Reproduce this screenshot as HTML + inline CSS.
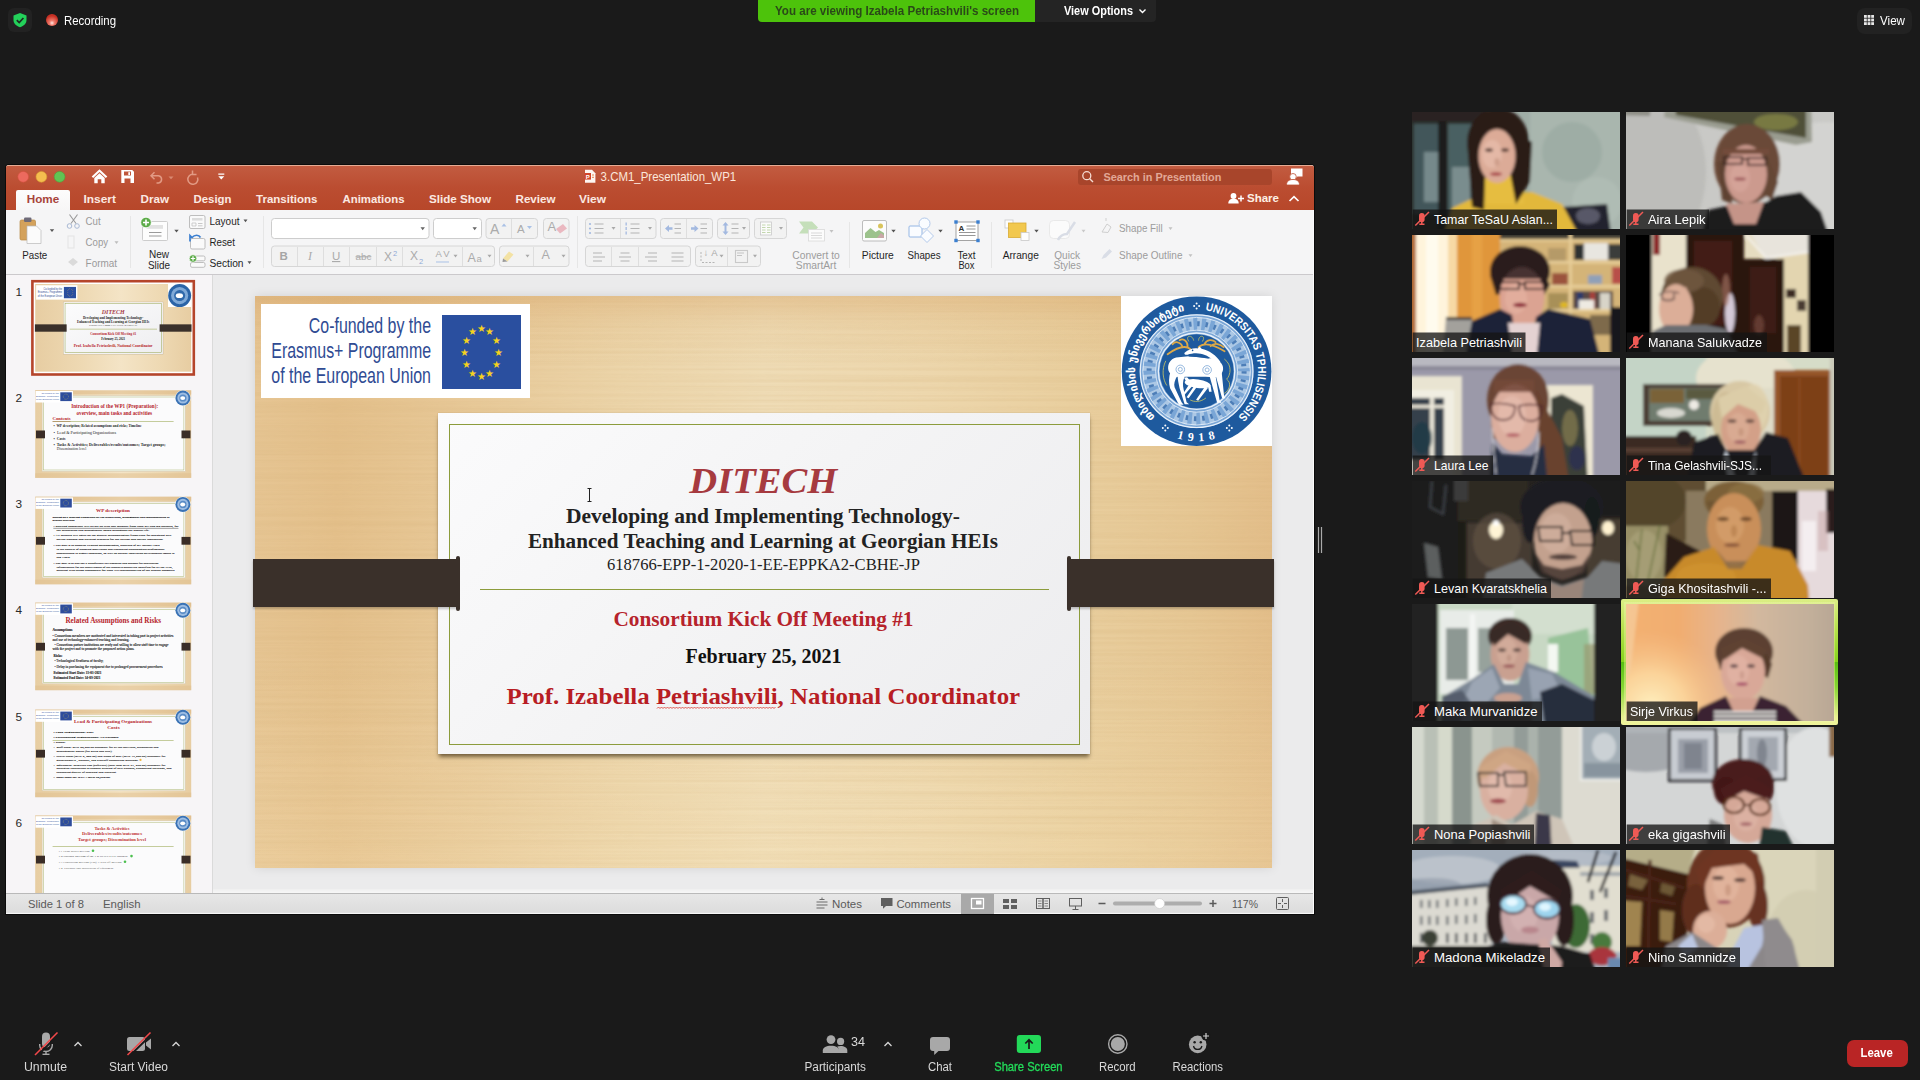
<!DOCTYPE html>
<html lang="en">
<head>
<meta charset="utf-8">
<title>Zoom Meeting</title>
<style>
html,body{margin:0;padding:0;background:#1a1a1a;}
body{width:1920px;height:1080px;overflow:hidden;position:relative;font-family:"Liberation Sans",sans-serif;}
.a{position:absolute;}
svg{position:absolute;left:0;top:0;overflow:visible;}
svg text{font-family:"Liberation Sans",sans-serif;white-space:pre;}
.ser{font-family:"Liberation Serif",serif !important;}
.tile{position:absolute;width:208px;height:117px;overflow:hidden;background:#333;}
.nm{position:absolute;left:0;bottom:0;height:19px;background:rgba(0,0,0,.55);}
</style>
</head>
<body>

<!-- ================= ZOOM TOP CHROME ================= -->
<div class="a" style="left:8px;top:8px;width:24px;height:24px;border-radius:6px;background:#222;"></div>
<div class="a" style="left:758px;top:0;width:277px;height:22px;background:#4dc30b;border-radius:0 0 0 4px;"></div>
<div class="a" style="left:1035px;top:0;width:121px;height:22px;background:#242424;border-radius:0 0 4px 0;"></div>
<div class="a" style="left:1857px;top:8px;width:55px;height:26px;border-radius:8px;background:#222;"></div>

<!-- ================= POWERPOINT WINDOW ================= -->
<div class="a" style="left:6px;top:165px;width:1308px;height:749px;border-radius:3px 3px 0 0;background:#ececec;box-shadow:0 0 0 1px #0b0b0b;"></div>
<div class="a" style="left:6px;top:165px;width:1308px;height:45px;border-radius:3px 3px 0 0;background:linear-gradient(#e6ab93 0,#e6ab93 1px,#c25b40 1.500px,#bb4d31 50%,#b7472a);"></div>
<div class="a" style="left:16px;top:190px;width:54px;height:21px;background:linear-gradient(#fdfcfc,#f7f6f6);border-radius:2px 2px 0 0;"></div>
<div class="a" style="left:1078px;top:169px;width:194px;height:16px;background:#a8452b;border-radius:3px;"></div>
<div class="a" style="left:6px;top:210px;width:1308px;height:64px;background:#f5f5f6;border-bottom:1px solid #cbc9cc;"></div>
<div class="a" style="left:6px;top:275px;width:206px;height:618px;background:#f7f5f7;border-right:1px solid #dadada;"></div>
<div class="a" style="left:213px;top:275px;width:1101px;height:618px;background:#ebebec;"></div>
<div class="a" style="left:213px;top:889px;width:1100px;height:4px;background:linear-gradient(#efefef,#f7f7f7);"></div>
<div class="a" style="left:6px;top:893px;width:1308px;height:21px;background:linear-gradient(#e7e7e7,#dcdcdc 92%,#f6f6f6 96%);border-top:1px solid #b9b9b9;box-sizing:border-box;"></div>
<div class="a" style="left:961px;top:894px;width:33px;height:20px;background:#a9a9a9;"></div>
<div class="a" style="left:1313px;top:210px;width:1px;height:704px;background:#fbfbfb;"></div>
<!--CHROME-START-->
<!-- ===== ppt chrome: title bar, tabs, ribbon, status ===== -->
<svg width="1920" height="1080" viewBox="0 0 1920 1080">
  <!-- traffic lights -->
  <circle cx="23.200" cy="176.800" r="5.400" fill="#ec6a5e" stroke="#d5503f" stroke-width=".600"/>
  <circle cx="41.400" cy="176.800" r="5.400" fill="#f5bd4f" stroke="#d8a033" stroke-width=".600"/>
  <circle cx="59.600" cy="176.800" r="5.400" fill="#61c454" stroke="#4aa63b" stroke-width=".600"/>
  <!-- home -->
  <path d="M99.500 169.300 L107.300 176.600 L105.800 177.900 L99.500 172 L93.200 177.900 L91.700 176.600 Z M94.300 177.900 L99.500 173.300 L104.700 177.900 V183.300 H101.300 V179.300 H97.700 V183.300 H94.300 Z" fill="#fff"/>
  <!-- save -->
  <path d="M121.300 170 H132.200 L134 171.800 V183 H121.300 Z M124 171.600 V175.600 H131 V171.600 Z M124.500 178.500 V183 H130.500 V178.500 Z" fill="#fff" fill-rule="evenodd"/>
  <rect x="128.300" y="172.200" width="1.700" height="2.800" fill="#fff"/>
  <!-- undo / redo (faded) -->
  <g fill="none" stroke="#e29a84" stroke-width="1.500">
    <path d="M154.500 172.200 L151 175.700 L154.500 179.200 M151.300 175.700 H158.500 A3.700 3.700 0 0 1 158.500 183 H156.500"/>
    <path d="M192.500 170.500 V174.500 H196.500 M192.800 174.300 A5 5 0 1 0 197.500 177.500" />
  </g>
  <path d="M168.500 176.500 h5 l-2.500 2.800 z" fill="#d98a73"/>
  <path d="M218.300 173.500 h6 v1.300 h-6 z M218.300 176.300 h6 l-3 3.300 z" fill="#fff"/>
  <!-- title -->
  <path d="M585 169.800 h7 l3.400 3.400 v9.600 h-10.400 z" fill="#fdf6f2"/>
  <rect x="584.700" y="173" width="6.300" height="6.600" fill="#d2452c"/>
  <text x="585.700" y="178.600" font-size="6" font-weight="bold" fill="#fff">P</text>
  <path d="M592 175 h2 M592 177.300 h2" stroke="#e8854a" stroke-width="1"/>
  <text x="600.600" y="181" font-size="11.900" fill="#fbe8dc" textLength="135.600" lengthAdjust="spacingAndGlyphs">3.CM1_Presentation_WP1</text>
  <!-- search -->
  <circle cx="1086.800" cy="175.700" r="4" fill="none" stroke="#f5dcd3" stroke-width="1.300"/>
  <path d="M1089.700 178.700 L1093 182" stroke="#f5dcd3" stroke-width="1.400"/>
  <text x="1103.400" y="181" font-size="10.900" font-weight="bold" fill="#e2a896" textLength="118" lengthAdjust="spacingAndGlyphs">Search in Presentation</text>
  <!-- account -->
  <path d="M1291 168.500 h11.500 v8 h-5 l-2.500 2.200 v-2.200 h-4 z" fill="#fff"/>
  <circle cx="1293" cy="176.800" r="3.300" fill="#fff" stroke="#bd5034" stroke-width=".800"/>
  <path d="M1286.500 185 c0 -4 3 -5.500 6.500 -5.500 s6.500 1.500 6.500 5.500 z" fill="#fff" stroke="#bd5034" stroke-width=".800"/>
  <!-- share -->
  <circle cx="1233.500" cy="196" r="2.900" fill="#fff"/>
  <path d="M1228.300 203.500 c0 -3.500 2.300 -4.800 5.200 -4.800 s5.200 1.300 5.200 4.800 z" fill="#fff"/>
  <path d="M1241 195.500 v6 M1238 198.500 h6" stroke="#fff" stroke-width="1.500"/>
  <text x="1247" y="201.600" font-size="11.500" font-weight="bold" fill="#fdf0e4" textLength="32" lengthAdjust="spacingAndGlyphs">Share</text>
  <path d="M1289.500 201 L1294 196.700 L1298.500 201" fill="none" stroke="#fff" stroke-width="1.700"/>
  <!-- tabs -->
  <g font-size="11.400" font-weight="bold" fill="#fbe9e2">
    <text x="26.700" y="202.900" fill="#a8443a" textLength="32.500" lengthAdjust="spacingAndGlyphs">Home</text>
    <text x="83.500" y="202.900" textLength="32.500" lengthAdjust="spacingAndGlyphs">Insert</text>
    <text x="140.500" y="202.900" textLength="28.500" lengthAdjust="spacingAndGlyphs">Draw</text>
    <text x="193.500" y="202.900" textLength="38" lengthAdjust="spacingAndGlyphs">Design</text>
    <text x="256" y="202.900" textLength="61.500" lengthAdjust="spacingAndGlyphs">Transitions</text>
    <text x="342.500" y="202.900" textLength="62" lengthAdjust="spacingAndGlyphs">Animations</text>
    <text x="429" y="202.900" textLength="62" lengthAdjust="spacingAndGlyphs">Slide Show</text>
    <text x="515.500" y="202.900" textLength="40" lengthAdjust="spacingAndGlyphs">Review</text>
    <text x="579" y="202.900" textLength="27" lengthAdjust="spacingAndGlyphs">View</text>
  </g>

  <!-- ===== ribbon ===== -->
  <g stroke="#e6e6e6" stroke-width="1">
    <path d="M130.500 216 V268 M263.500 216 V268 M577.500 216 V268 M849.500 222 V268 M991.500 222 V268"/>
  </g>
  <!-- paste -->
  <rect x="20" y="220" width="15.500" height="20" rx="1.500" fill="#d4a25c" stroke="#b98943" stroke-width=".700"/>
  <rect x="24" y="217.500" width="7.500" height="4.500" rx="1.200" fill="#6e6a78"/>
  <path d="M27 226 h9.500 l4.500 4.500 v13 h-14 z" fill="#fbfbfb" stroke="#b9b9b9" stroke-width=".700"/>
  <path d="M49.800 229.300 h4.400 l-2.200 2.800 z" fill="#555"/>
  <text x="22.300" y="258.600" font-size="10.800" fill="#1f1f1f" textLength="25" lengthAdjust="spacingAndGlyphs">Paste</text>
  <!-- cut copy format (disabled) -->
  <g fill="none" stroke="#a9b9d4" stroke-width="1"><circle cx="69.500" cy="226" r="2.300"/><circle cx="77" cy="226" r="2.300"/></g>
  <path d="M69.500 214.500 L76 223.500 M77.500 214.500 L71 223.500" stroke="#9a9a9a" stroke-width="1.100"/>
  <rect x="68" y="236" width="6" height="12" fill="none" stroke="#e3e3e3" stroke-width="1"/>
  <path d="M68 262 l5 -4 l5 4 l-5 4 z" fill="#dadada"/>
  <g font-size="10.800" fill="#9a9a9a">
    <text x="85.600" y="225" textLength="15" lengthAdjust="spacingAndGlyphs">Cut</text>
    <text x="85.600" y="245.600" textLength="22.500" lengthAdjust="spacingAndGlyphs">Copy</text>
    <text x="85.600" y="266.700" textLength="31.500" lengthAdjust="spacingAndGlyphs">Format</text>
  </g>
  <path d="M114.500 241.300 h4 l-2 2.600 z" fill="#bdbdbd"/>
  <!-- new slide -->
  <rect x="142.500" y="221.500" width="25" height="19" rx="1" fill="#fdfdfd" stroke="#c2c2c2" stroke-width=".800"/>
  <rect x="146.500" y="225" width="16.500" height="3.800" fill="#e2e2e2"/>
  <path d="M149 232.500 h12.500 M149 236 h12.500" stroke="#9a9a9a" stroke-width="1"/>
  <circle cx="146" cy="222.500" r="5.300" fill="#5cab49" stroke="#fff" stroke-width=".800"/>
  <path d="M146 219.500 v6 M143 222.500 h6" stroke="#fff" stroke-width="1.600"/>
  <path d="M174.300 229.800 h4.400 l-2.200 2.800 z" fill="#555"/>
  <g font-size="10.800" fill="#1f1f1f">
    <text x="149" y="258" textLength="20" lengthAdjust="spacingAndGlyphs">New</text>
    <text x="148" y="268.800" textLength="22" lengthAdjust="spacingAndGlyphs">Slide</text>
  </g>
  <!-- layout/reset/section -->
  <rect x="189.500" y="215.500" width="15.500" height="13" rx="1.500" fill="#fafafa" stroke="#b7b7b7" stroke-width=".900"/>
  <rect x="192" y="218" width="10.500" height="2.600" fill="#dcdcdc"/><path d="M192 223 h4 v3 h-4 z" fill="none" stroke="#bbb" stroke-width=".700"/><path d="M198 223.500 h4.500 M198 225.800 h4.500" stroke="#bbb" stroke-width=".800"/>
  <rect x="190.500" y="238.500" width="14.500" height="10.500" rx="1.500" fill="#fafafa" stroke="#b7b7b7" stroke-width=".900"/>
  <path d="M190 241.500 v-6 l2 2 c2.500 -3 7 -3 8.500 0" fill="none" stroke="#3b7fd0" stroke-width="1.700"/>
  <rect x="190.500" y="256" width="14.500" height="4.800" rx="1.500" fill="#fafafa" stroke="#b7b7b7" stroke-width=".900"/>
  <rect x="190.500" y="262.500" width="14.500" height="4.800" rx="1.500" fill="#fafafa" stroke="#b7b7b7" stroke-width=".900"/>
  <circle cx="193" cy="258.500" r="3.800" fill="#5cab49" stroke="#fff" stroke-width=".700"/>
  <path d="M193 256.300 v4.400 M190.800 258.500 h4.400" stroke="#fff" stroke-width="1.200"/>
  <g font-size="10.800" fill="#1f1f1f">
    <text x="209.500" y="225.300" textLength="30" lengthAdjust="spacingAndGlyphs">Layout</text>
    <text x="209.500" y="246.300" textLength="25.500" lengthAdjust="spacingAndGlyphs">Reset</text>
    <text x="209.500" y="267" textLength="34" lengthAdjust="spacingAndGlyphs">Section</text>
  </g>
  <path d="M243.500 219.500 h4 l-2 2.700 z M247.500 261.300 h4 l-2 2.700 z" fill="#555"/>

  <!-- font boxes -->
  <g fill="#fff" stroke="#cdcdcd" stroke-width="1">
    <rect x="271.500" y="218.500" width="157.500" height="20" rx="3"/>
    <rect x="433.500" y="218.500" width="48" height="20" rx="3"/>
  </g>
  <path d="M420.500 227.300 h4.400 l-2.200 3 z M472.500 227.300 h4.400 l-2.200 3 z" fill="#666"/>
  <g fill="#f2f2f2" stroke="#d6d6d6" stroke-width="1">
    <rect x="486" y="218.500" width="51.500" height="20" rx="3"/>
    <rect x="543.500" y="218.500" width="25.500" height="20" rx="3"/>
    <rect x="271.500" y="246" width="223" height="20.500" rx="3"/>
    <rect x="499.500" y="246" width="69.500" height="20.500" rx="3"/>
    <rect x="585.500" y="218.500" width="70.500" height="20" rx="3"/>
    <rect x="660.500" y="218.500" width="52" height="20" rx="3"/>
    <rect x="717.500" y="218.500" width="32" height="20" rx="3"/>
    <rect x="754.500" y="218.500" width="32" height="20" rx="3"/>
    <rect x="585.500" y="246" width="105" height="20.500" rx="3"/>
    <rect x="695.500" y="246" width="65" height="20.500" rx="3"/>
  </g>
  <g stroke="#dedede" stroke-width="1">
    <path d="M511.500 219 v19 M297.500 247 v19 M323.500 247 v19 M349.500 247 v19 M376.500 247 v19 M402.500 247 v19 M462.500 247 v19 M533.500 247 v19 M620.500 219 v19 M686.500 219 v19 M611.500 247 v19 M638.500 247 v19 M727.500 247 v19"/>
  </g>
  <g fill="#ababab" font-size="13">
    <text x="490" y="233.500" font-size="14">A</text><text x="517" y="233" font-size="11.500">A</text>
    <text x="547.500" y="231" font-size="13">A</text>
    <text x="279.500" y="260" font-weight="bold" font-size="11.500" fill="#a5a5a5">B</text>
    <text x="308" y="260" font-style="italic" font-size="12" class="ser">I</text>
    <text x="332" y="260" font-size="11.500" text-decoration="underline">U</text>
    <text x="355.500" y="259.800" font-size="9.800" text-decoration="line-through">abc</text>
    <text x="384" y="261" font-size="12">X</text><text x="393" y="255.500" font-size="7.500" fill="#8fa9d6">2</text>
    <text x="410" y="259.500" font-size="12">X</text><text x="419" y="263.500" font-size="7.500" fill="#8fa9d6">2</text>
    <text x="435.500" y="256.500" font-size="9.500" textLength="14" lengthAdjust="spacing">AV</text>
    <text x="467.500" y="261.500" font-size="12.500">A</text><text x="476.500" y="261.500" font-size="9.500">a</text>
    <text x="541.500" y="258.500" font-size="12.500">A</text>
  </g>
  <path d="M501.500 226.500 l2.500 -3 l2.500 3 z" fill="#a9c1e6"/><path d="M527 226 l2.500 3 l2.500 -3 z" fill="#a9c1e6"/>
  <path d="M556 229 l7 -5 l4 4.500 l-7 5 z" fill="#eab8c0"/>
  <path d="M436 262 h13" stroke="#a9c1e6" stroke-width="1"/>
  <path d="M503 258.500 l6 -7 l4.500 3 l-6 7 z" fill="#f3e2a4"/><path d="M503 258.500 l4.500 3 l-5 .500 z" fill="#999"/>
  <path d="M453.500 254.800 h4 l-2 2.700 z M487.500 254.800 h4 l-2 2.700 z M525.500 254.800 h4 l-2 2.700 z M561.500 254.800 h4 l-2 2.700 z" fill="#a9a9a9"/>
  <!-- list / indent icons -->
  <g stroke="#b4b4b4" stroke-width="1.100" fill="none">
    <path d="M594.500 224 h9 M594.500 228.500 h9 M594.500 233 h9 M630.500 224 h9 M630.500 228.500 h9 M630.500 233 h9"/>
    <path d="M674.500 224 h6.500 M674.500 228.500 h6.500 M674.500 233 h6.500 M700.500 224 h6.500 M700.500 228.500 h6.500 M700.500 233 h6.500"/>
    <path d="M731.500 224 h7 M731.500 228.500 h7 M731.500 233 h7"/>
    <path d="M593 257 h12 M593 253 h9 M593 261 h9 M619 257 h12 M620.500 253 h9 M620.500 261 h9 M645 257 h12 M648 253 h9 M648 261 h9 M671.500 257 h12 M671.500 253 h12 M671.500 261 h12"/>
    <rect x="735.500" y="250.500" width="12" height="12" stroke="#c9c9c9"/><path d="M737 253 h7 M737 255.500 h5" stroke="#c4c4c4"/>
  </g>
  <g fill="#a3b9e0">
    <circle cx="590" cy="224" r="1.100"/><circle cx="590" cy="228.500" r="1.100"/><circle cx="590" cy="233" r="1.100"/>
    <rect x="625.500" y="222.500" width="1.300" height="3"/><rect x="625.500" y="227" width="1.300" height="3"/><rect x="625.500" y="231.500" width="1.300" height="3"/>
    <path d="M665 228.500 l4 -3.500 v2.300 h3.500 v2.400 h-3.500 v2.300 z M698.500 228.500 l-4 -3.500 v2.300 h-3.500 v2.400 h3.500 v2.300 z"/>
    <path d="M725.500 222 l3 3.500 h-2 v6 h2 l-3 3.500 l-3 -3.500 h2 v-6 h-2 z"/>
  </g>
  <rect x="760.500" y="222" width="11" height="13" fill="#fbfbfb" stroke="#c9c9c9" stroke-width=".800"/>
  <path d="M762 225 h3.500 M762 227.500 h3.500 M762 230 h3.500 M762 232.500 h3.500 M767 225 h3.500 M767 227.500 h3.500 M767 230 h3.500 M767 232.500 h3.500" stroke="#bcd3a5" stroke-width=".900"/>
  <path d="M611.500 227 h4 l-2 2.700 z M648 227 h4 l-2 2.700 z M742 227 h4 l-2 2.700 z M779 227 h4 l-2 2.700 z M719.500 254.800 h4 l-2 2.700 z M753 254.800 h4 l-2 2.700 z" fill="#a9a9a9"/>
  <text x="703.500" y="256" font-size="9.500" fill="#a9a9a9" textLength="14" lengthAdjust="spacing">↓A</text>
  <path d="M701 252 v10.500 M702 262.500 h14" stroke="#b5b5b5" stroke-width="1" stroke-dasharray="2 1.500" fill="none"/>
  <!-- convert to smartart -->
  <path d="M799 221.500 h13 l6 6 l-6 6 h-13 l4.500 -6 z" fill="#c5dfba"/>
  <rect x="808.500" y="229.500" width="16" height="11.500" fill="#fcfcfc" stroke="#d9d9d9" stroke-width=".800"/>
  <path d="M811 233 h11 M811 235.500 h11 M811 238 h11" stroke="#d5d5d5" stroke-width=".900"/>
  <path d="M829.500 230 h4 l-2 2.700 z" fill="#c2c2c2"/>
  <g font-size="10.800" fill="#9c9c9c">
    <text x="792.300" y="258.700" textLength="47.500" lengthAdjust="spacingAndGlyphs">Convert to</text>
    <text x="795.800" y="269.400" textLength="40.600" lengthAdjust="spacingAndGlyphs">SmartArt</text>
  </g>
  <!-- picture -->
  <rect x="862.500" y="220.500" width="24" height="20.500" rx="1.500" fill="#fcfcfc" stroke="#b5b5b5" stroke-width=".900"/>
  <path d="M865 238 v-5 l5.500 -5 l5 4 l3.500 -2 l5 3 v5 z" fill="#9cc28c"/><path d="M877 238 l4 -5 l3 2.500 v2.500 z" fill="#c9a7a7"/>
  <circle cx="880.500" cy="226" r="2.500" fill="#d9c45c"/>
  <path d="M891.300 229.800 h4.400 l-2.200 2.800 z M938.300 229.800 h4.400 l-2.200 2.800 z M1034.300 229.800 h4.400 l-2.200 2.800 z" fill="#555"/>
  <!-- shapes -->
  <rect x="909" y="226" width="13" height="11" rx="1" fill="#fafcff" stroke="#8bb0e2" stroke-width=".900"/>
  <circle cx="924.500" cy="223.500" r="5.500" fill="#fafcff" stroke="#a9c3e8" stroke-width=".900"/>
  <path d="M927 229.500 l6.500 6.500 l-6.500 6.500 l-6.500 -6.500 z" fill="#fafcff" stroke="#a9c3e8" stroke-width=".900"/>
  <!-- text box -->
  <rect x="956" y="222" width="22" height="18.500" fill="#fff" stroke="#9a9a9a" stroke-width=".900"/>
  <text x="958.500" y="231" font-size="8" font-weight="bold" fill="#333">A</text>
  <path d="M966.500 226 h9 M966.500 229 h9 M959 232.500 h16.500 M959 235.500 h16.500" stroke="#8a8a8a" stroke-width=".900"/>
  <g fill="#3b7fd0"><rect x="954.300" y="220.300" width="3.400" height="3.400"/><rect x="976.300" y="220.300" width="3.400" height="3.400"/><rect x="954.300" y="238.800" width="3.400" height="3.400"/><rect x="976.300" y="238.800" width="3.400" height="3.400"/></g>
  <!-- arrange -->
  <rect x="1005" y="220" width="8" height="8" fill="#fdfdfd" stroke="#c9c9c9" stroke-width=".800"/>
  <rect x="1008.500" y="223" width="17.500" height="14.500" fill="#f2c84e" stroke="#d9ab32" stroke-width=".800"/>
  <rect x="1021" y="232.500" width="8" height="8" fill="#fdfdfd" stroke="#c9c9c9" stroke-width=".800"/>
  <!-- quick styles (disabled) -->
  <rect x="1049.500" y="220.500" width="20" height="18" rx="4" fill="#fbfbfb" stroke="#e6e6e6" stroke-width=".900"/>
  <path d="M1058 240 c2 -4 6 -6 9 -6 l8 -12" fill="none" stroke="#d9dde6" stroke-width="2.500"/>
  <path d="M1081.500 229.800 h4 l-2 2.700 z" fill="#c9c9c9"/>
  <g font-size="10.800" fill="#1f1f1f">
    <text x="861.800" y="258.700" textLength="32" lengthAdjust="spacingAndGlyphs">Picture</text>
    <text x="907.500" y="258.700" textLength="33" lengthAdjust="spacingAndGlyphs">Shapes</text>
    <text x="957.400" y="258.700" textLength="18.200" lengthAdjust="spacingAndGlyphs">Text</text>
    <text x="958.400" y="269.400" textLength="16.100" lengthAdjust="spacingAndGlyphs">Box</text>
    <text x="1002.700" y="258.700" textLength="36.100" lengthAdjust="spacingAndGlyphs">Arrange</text>
  </g>
  <g font-size="10.800" fill="#9c9c9c">
    <text x="1054.300" y="258.700" textLength="25.700" lengthAdjust="spacingAndGlyphs">Quick</text>
    <text x="1053.600" y="269.400" textLength="27.400" lengthAdjust="spacingAndGlyphs">Styles</text>
    <text x="1119" y="232.300" font-size="10.600" textLength="43.600" lengthAdjust="spacingAndGlyphs">Shape Fill</text>
    <text x="1119" y="259.400" font-size="10.600" textLength="63.500" lengthAdjust="spacingAndGlyphs">Shape Outline</text>
  </g>
  <path d="M1168.500 227.300 h4 l-2 2.700 z M1188.500 254.300 h4 l-2 2.700 z" fill="#c2c2c2"/>
  <path d="M1102 232 l5 -8 l4 3 l-3 5.500 z M1106 221 v-3" fill="none" stroke="#cfcfcf" stroke-width="1"/>
  <path d="M1101.500 259 l2 -4 l6 -6 l2.500 2.500 l-6 6 z" fill="#d9dde6"/>

  <!-- ===== status bar ===== -->
  <g font-size="11.300" fill="#5a5a5a">
    <text x="28" y="908" textLength="56" lengthAdjust="spacingAndGlyphs">Slide 1 of 8</text>
    <text x="103" y="908" textLength="37.500" lengthAdjust="spacingAndGlyphs">English</text>
    <text x="832" y="908" textLength="30" lengthAdjust="spacingAndGlyphs">Notes</text>
    <text x="896.400" y="908" textLength="54.600" lengthAdjust="spacingAndGlyphs">Comments</text>
    <text x="1232" y="908" textLength="26" lengthAdjust="spacingAndGlyphs">117%</text>
  </g>
  <path d="M816.500 902 h11 M816.500 905 h11 M816.500 908 h8 M819.500 899.500 h5 M822 897.500 v2" stroke="#6a6a6a" stroke-width="1" fill="none"/>
  <path d="M881 898 h11.500 v8 h-6.500 l-3 2.700 v-2.700 h-2 z" fill="#5f5f5f"/>
  <rect x="971.500" y="898.500" width="12" height="10" fill="none" stroke="#fff" stroke-width="1.300"/><rect x="976" y="900.500" width="5.500" height="4" fill="#fff"/>
  <g fill="#5f5f5f"><rect x="1003" y="899" width="6" height="4"/><rect x="1011" y="899" width="6" height="4"/><rect x="1003" y="905" width="6" height="4"/><rect x="1011" y="905" width="6" height="4"/></g>
  <g fill="none" stroke="#5f5f5f" stroke-width="1"><rect x="1036.500" y="898.500" width="6.500" height="10"/><rect x="1043" y="898.500" width="6.500" height="10"/><path d="M1038 901 h3.500 M1038 903.500 h3.500 M1038 906 h3.500 M1044.500 901 h3.500 M1044.500 903.500 h3.500 M1044.500 906 h3.500" stroke-width=".700"/>
    <rect x="1069.500" y="898.500" width="12" height="7.500"/><path d="M1075.500 906 v3.500 M1072.500 909.500 h6"/></g>
  <path d="M1098.500 903.500 h7 M1209.500 903.500 h7 M1213 900 v7" stroke="#5a5a5a" stroke-width="1.500"/>
  <rect x="1113" y="901.500" width="89" height="4" rx="2" fill="#adadad"/>
  <circle cx="1159.600" cy="903.500" r="5" fill="#fff" stroke="#c9c9c9" stroke-width=".600"/>
  <g fill="none" stroke="#5f5f5f" stroke-width="1"><rect x="1276.500" y="897.500" width="12" height="12" rx="1"/><path d="M1282.500 899 v3 M1282.500 908 v-3 M1278 903.500 h3 M1287 903.500 h-3"/></g>
</svg>
<!--CHROME-END-->
<!--SLIDE-START-->
<!-- ===== main slide ===== -->
<div class="a" style="left:255px;top:296px;width:1017px;height:572px;box-shadow:0 0 10px rgba(0,0,0,.10);background:
 linear-gradient(180deg,rgba(212,156,92,.34) 0%,rgba(214,160,96,.10) 5%,rgba(214,160,96,0) 12%,rgba(255,238,200,0) 62%,rgba(255,238,196,.20) 100%),
 linear-gradient(90deg,#e6c593 0%,#e4c08b 8%,#e8ca9a 22%,#ecd5aa 36%,#efdcb6 50%,#edd7ad 66%,#e9cf9f 80%,#e6c794 92%,#e3be8a 100%);"></div>
<svg width="1920" height="1080" viewBox="0 0 1920 1080" style="pointer-events:none">
  <defs>
    <filter id="wood" x="0" y="0" width="100%" height="100%">
      <feTurbulence type="fractalNoise" baseFrequency="0.0015 0.35" numOctaves="3" seed="7" result="n"/>
      <feColorMatrix type="matrix" values="0 0 0 0 0.62  0 0 0 0 0.40  0 0 0 0 0.16  0.9 0 0 0 -0.28"/>
    </filter>
    <clipPath id="slideclip"><rect x="255" y="296" width="1017" height="572"/></clipPath>
  </defs>
  <rect x="255" y="296" width="1017" height="572" filter="url(#wood)" opacity=".35"/>
</svg>
<!-- EU box -->
<div class="a" style="left:261px;top:304px;width:269px;height:94px;background:#fff;"></div>
<div class="a" style="left:442px;top:315px;width:79px;height:74px;background:#2a4f9f;"></div>
<!-- university logo box -->
<div class="a" style="left:1121px;top:296px;width:151px;height:150px;background:#fff;"></div>
<!-- card -->
<div class="a" style="left:438px;top:413px;width:652px;height:341px;background:linear-gradient(135deg,#fbfbfc 0%,#f4f4f5 45%,#ececee 100%);box-shadow:0 4px 4px -1px rgba(50,35,10,.62),0 0 1px rgba(60,40,10,.25);"></div>
<div class="a" style="left:449px;top:424px;width:629px;height:319px;border:1px solid #8c9c3c;"></div>
<div class="a" style="left:480px;top:589px;width:569px;height:1px;background:#8c9c3c;"></div>
<!-- dark bands -->
<div class="a" style="left:253px;top:559px;width:205px;height:48px;background:#3a302a;box-shadow:0 2px 2px rgba(0,0,0,.22);"></div>
<div class="a" style="left:1068px;top:559px;width:206px;height:48px;background:#3a302a;box-shadow:0 2px 2px rgba(0,0,0,.22);"></div>
<div class="a" style="left:456px;top:556px;width:4px;height:55px;background:#3a302a;border-radius:2px;"></div>
<div class="a" style="left:1066.500px;top:556px;width:4px;height:55px;background:#3a302a;border-radius:2px;"></div>
<svg width="1920" height="1080" viewBox="0 0 1920 1080">
  <!-- EU text -->
  <g font-size="21.300" fill="#2f4b93" text-anchor="end">
    <text x="431" y="332.800" textLength="122.200" lengthAdjust="spacingAndGlyphs">Co-funded by the</text>
    <text x="431" y="357.800" textLength="159.700" lengthAdjust="spacingAndGlyphs">Erasmus+ Programme</text>
    <text x="431" y="383" textLength="159.700" lengthAdjust="spacingAndGlyphs">of the European Union</text>
  </g>
  <!-- EU stars -->
  <g fill="#f5d31d" font-size="9.500" text-anchor="middle">
    <text x="481.2" y="331.9">★</text><text x="489.9" y="335.1">★</text><text x="496.2" y="343.9">★</text><text x="498.5" y="355.9">★</text><text x="496.2" y="367.9">★</text><text x="489.9" y="376.7">★</text><text x="481.2" y="379.9">★</text><text x="472.6" y="376.7">★</text><text x="466.3" y="367.9">★</text><text x="464.0" y="355.9">★</text><text x="466.3" y="343.9">★</text><text x="472.6" y="335.1">★</text>
  </g>
  <!-- card text -->
  <g class="ser" text-anchor="middle">
    <text class="ser" x="763.300" y="492.700" font-size="36" font-style="italic" font-weight="bold" fill="#a63a3f" textLength="148" lengthAdjust="spacingAndGlyphs">DITECH</text>
    <text class="ser" x="763" y="522.800" font-size="20.800" font-weight="bold" fill="#222" textLength="394" lengthAdjust="spacingAndGlyphs">Developing and Implementing Technology-</text>
    <text class="ser" x="763" y="547.700" font-size="20.800" font-weight="bold" fill="#222" textLength="470" lengthAdjust="spacingAndGlyphs">Enhanced Teaching and Learning at Georgian HEIs</text>
    <text class="ser" x="763.500" y="570" font-size="17" fill="#222" textLength="313" lengthAdjust="spacingAndGlyphs">618766-EPP-1-2020-1-EE-EPPKA2-CBHE-JP</text>
    <text class="ser" x="763.500" y="626.200" font-size="21" font-weight="bold" fill="#b6232b" textLength="300" lengthAdjust="spacingAndGlyphs">Consortium Kick Off Meeting #1</text>
    <text class="ser" x="763.500" y="663.300" font-size="21" font-weight="bold" fill="#111" textLength="156" lengthAdjust="spacingAndGlyphs">February 25, 2021</text>
    <text class="ser" x="763.300" y="704.300" font-size="23.500" font-weight="bold" fill="#b81d24" textLength="513.700" lengthAdjust="spacingAndGlyphs">Prof. Izabella Petriashvili, National Coordinator</text>
  </g>
  <path d="M657 708.500 l1.500 -1.500 l1.500 1.500 l1.500 -1.500 l1.500 1.500 l1.500 -1.500 l1.500 1.500 l1.500 -1.500 l1.500 1.500 l1.500 -1.500 l1.500 1.500 l1.500 -1.500 l1.500 1.500 l1.500 -1.500 l1.500 1.500 l1.500 -1.500 l1.500 1.500 l1.500 -1.500 l1.500 1.500 l1.500 -1.500 l1.500 1.500 l1.500 -1.500 l1.500 1.500 l1.500 -1.500 l1.500 1.500 l1.500 -1.500 l1.500 1.500 l1.500 -1.500 l1.500 1.500 l1.500 -1.500 l1.500 1.500 l1.500 -1.500 l1.500 1.500 l1.500 -1.500 l1.500 1.500 l1.500 -1.500 l1.500 1.500 l1.500 -1.500 l1.500 1.500 l1.500 -1.500 l1.500 1.500 l1.500 -1.500 l1.500 1.500 l1.500 -1.500 l1.500 1.500 l1.500 -1.500 l1.500 1.500 l1.500 -1.500 l1.500 1.500 l1.500 -1.500 l1.500 1.500 l1.500 -1.500 l1.500 1.500 l1.500 -1.500 l1.500 1.500 l1.500 -1.500 l1.500 1.500 l1.500 -1.500 l1.500 1.500 l1.500 -1.500 l1.500 1.500 l1.500 -1.500 l1.500 1.500 l1.500 -1.500 l1.500 1.500 l1.500 -1.500 l1.500 1.500 l1.500 -1.500 l1.500 1.500 l1.500 -1.500 l1.500 1.500 l1.500 -1.500 l1.500 1.500 l1.500 -1.500 l1.500 1.500 l1.500 -1.500 l1.500 1.500 l1.500 -1.500 l1.500 1.500 l1.500 -1.500" fill="none" stroke="#d9342b" stroke-width=".800"/>
  <!-- I-beam cursor -->
  <path d="M587.500 488.500 h4 M589.500 488.500 v13 M587.500 501.500 h4" stroke="#222" stroke-width="1" fill="none"/>
</svg>
<!-- ===== university seal ===== -->
<svg width="1920" height="1080" viewBox="0 0 1920 1080">
  <defs>
    <path id="arcGe" d="M1155.400 416.900 A61.500 61.500 0 0 1 1187 310.500"/>
    <path id="arcLa" d="M1205.200 310.300 A61.500 61.500 0 0 1 1236.100 418.300"/>
    <path id="arcYr" d="M1176.700 438.300 A70 70 0 0 0 1216.500 438.300"/>
  </defs>
  <g transform="translate(1196.600 371.200)">
    <circle r="74.800" fill="#1e5a9e"/>
    <circle r="57" fill="#7aa6d6"/>
    <circle r="47.500" fill="none" stroke="#fff" stroke-width="13" stroke-dasharray="4.500 3.800" opacity=".38"/>
    <circle r="47.500" fill="none" stroke="#2d66a8" stroke-width="5" stroke-dasharray="2.500 5.800" opacity=".75"/>
    <circle r="56.300" fill="none" stroke="#e9f1fa" stroke-width="1.200"/>
    <circle r="53.800" fill="none" stroke="#e9f1fa" stroke-width=".800"/>
    <circle r="41" fill="none" stroke="#e9f1fa" stroke-width=".800"/>
    <circle r="38.200" fill="none" stroke="#e9f1fa" stroke-width="1.400"/>
    <circle r="37" fill="#1e5a9e"/>
    <!-- antlers -->
    <g fill="none" stroke="#dba848" stroke-width="1.800" stroke-linecap="round">
      <path d="M-6 -22 C-12 -27 -22 -22 -29 -17 M-14 -24 C-16 -30 -22 -30 -24 -27 M-9 -25 C-9 -31 -14 -33 -17 -31 M2 -24 C8 -30 18 -26 28 -20 M8 -27 C10 -32 16 -32 19 -29 M14 -25 C18 -29 24 -27 27 -24"/>
    </g>
    <g fill="none" stroke="#a9b26f" stroke-width="1" stroke-linecap="round">
      <path d="M-8 -30 C-12 -36 -4 -37 -3 -31 M2 -31 C2 -37 10 -36 6 -30 M28 -12 C36 -6 34 4 30 8 C36 12 32 20 28 22 M-31 -10 C-35 -2 -34 8 -30 14 M-6 29 C-2 31 4 31 9 27"/>
    </g>
    <!-- deer -->
    <g fill="#fff" stroke="none">
      <path d="M-28.500 -3 C-28.500 -9 -25 -13.500 -18 -14 L-8 -15 L14 -13 C22 -12 27 -8 26.500 -2 C26 3 22 6 17 6 L9 5.500 L-11 5.500 C-16 6 -20 6 -24 4 C-27 2 -28.500 0 -28.500 -3 Z"/>
      <path d="M24 -9 C20 -16 12 -21 5 -22.500 L3 -24.800 L1 -22.800 C-3 -23.500 -8 -22 -12 -18.500 C-13 -17 -11 -16 -9 -16.500 C-5 -18 0 -18.500 4 -17.500 C10 -16.500 15 -13 18 -9 Z"/>
      <path d="M-26 0 L-19 4 C-22 9 -23 13 -22 16 L-15 31 L-13 33.500 L-17.500 33.500 L-19 31 L-26.500 17 C-28 12 -28 6 -26 0 Z"/>
      <path d="M-19 4 L-12 5.500 C-14 10 -14 14 -13 18 L-10 31 L-7.500 33 L-12 33 L-17 17 C-18 12 -19 8 -19 4 Z"/>
      <path d="M13 5 L19 5 L23 29 L25 31.500 L20.500 31.500 Z"/>
      <path d="M19 4 L25 0 L27.500 25 L29 27 L25.500 27 Z"/>
      <ellipse cx="1" cy="12.500" rx="13" ry="4.300" transform="rotate(8 1 12.500)"/>
      <path d="M-10 11 L-12.500 6.500 L-9.500 6 L-6 10 Z M-8 14 L-4.500 15 L-12.500 24 L-14.500 24 Z M8 16 L11.500 16.500 L1.500 29.500 L-.500 28.500 Z M11 13 L14 14 L15 20.500 L12.500 20.500 Z M-3 15.500 L0 16 L-8 27 L-10 26 Z"/>
    </g>
    <path d="M-8 -15.600 C-2 -17.300 6 -16.800 13.500 -12.300 C6 -13.600 -2 -14.200 -8 -14.600 Z" fill="#1e5a9e"/>
    <g fill="none" stroke="#8ab0da" stroke-width=".900">
      <circle cx="-16.300" cy="-1.800" r="4.300"/><circle cx="-16.300" cy="-1.800" r="2"/>
      <circle cx="10.500" cy="-1.300" r="4.300"/><circle cx="10.500" cy="-1.300" r="2"/>
    </g>
    <circle cx="-4" cy="-20.800" r=".800" fill="#1e5a9e"/>
  </g>
  <g fill="#fff" font-weight="bold">
    <text font-size="11.500" style="font-family:'DejaVu Sans','Liberation Sans',sans-serif" textLength="136" lengthAdjust="spacingAndGlyphs"><textPath href="#arcGe">თბილისის უნივერსიტეტი</textPath></text>
    <text font-size="11.500" textLength="139" lengthAdjust="spacingAndGlyphs"><textPath href="#arcLa">UNIVERSITAS TPHILISENSIS</textPath></text>
    <text class="ser" font-size="12" textLength="39" lengthAdjust="spacing"><textPath href="#arcYr">1918</textPath></text>
  </g>
  <g fill="#fff">
    <!-- four-dot marks: top, bottom-right, bottom-left -->
    <circle cx="1196.600" cy="303.400" r="1"/><circle cx="1196.600" cy="308.400" r="1"/><circle cx="1194.100" cy="305.900" r="1"/><circle cx="1199.100" cy="305.900" r="1"/>
    <circle cx="1229.300" cy="425.400" r="1"/><circle cx="1229.300" cy="430.400" r="1"/><circle cx="1226.800" cy="427.900" r="1"/><circle cx="1231.800" cy="427.900" r="1"/>
    <circle cx="1165.300" cy="425.400" r="1"/><circle cx="1165.300" cy="430.400" r="1"/><circle cx="1162.800" cy="427.900" r="1"/><circle cx="1167.800" cy="427.900" r="1"/>
  </g>
</svg>
<!--SLIDE-END-->
<!--THUMBS-START-->
<!-- ===== thumbnails ===== -->
<svg width="1920" height="1080" viewBox="0 0 1920 1080">
  <defs>
    <linearGradient id="tw" x1="0" x2="1" y1="0" y2="0"><stop offset="0" stop-color="#e7cda2"/><stop offset=".3" stop-color="#eed9b3"/><stop offset=".55" stop-color="#f4e4c6"/><stop offset=".8" stop-color="#eed9b3"/><stop offset="1" stop-color="#e7cda2"/></linearGradient>
    <linearGradient id="tc" x1="0" x2="1" y1="0" y2="1"><stop offset="0" stop-color="#fcfcfd"/><stop offset="1" stop-color="#eeeef0"/></linearGradient>
    <clipPath id="thclip"><rect x="6" y="275" width="206" height="618"/></clipPath>
  </defs>
  <g font-size="11.800" fill="#2a2a2a">
    <text x="15.500" y="295.7">1</text>
    <text x="15.500" y="402.0">2</text>
    <text x="15.500" y="508.4">3</text>
    <text x="15.500" y="614.3">4</text>
    <text x="15.500" y="721.3">5</text>
    <text x="15.500" y="827.2">6</text>
  </g>
  <rect x="32.400" y="281.200" width="161.400" height="93.300" fill="#fff" stroke="#b5452b" stroke-width="2.600"/>
  <rect x="35.200" y="284" width="156" height="87.700" fill="url(#tw)"/>
  <g transform="translate(35.200 284) scale(.15340) translate(-255 -296)">
    <rect x="261" y="304" width="269" height="94" fill="#fff"/><rect x="442" y="315" width="79" height="74" fill="#2a4f9f"/>
    <rect x="1121" y="296" width="151" height="150" fill="#fff"/><circle cx="1196.600" cy="371.200" r="74.800" fill="#2a64a7"/><circle cx="1196.600" cy="371.200" r="56" fill="#7fa9d7"/><circle cx="1196.600" cy="371.200" r="36" fill="#2f69ab"/><ellipse cx="1195" cy="372" rx="24" ry="16" fill="#fff"/>
    <rect x="438" y="413" width="651" height="341" fill="url(#tc)" stroke="#c9b58f" stroke-width="3"/><rect x="449.500" y="424.500" width="629" height="319" fill="none" stroke="#8c9c3c" stroke-width="3"/>
    <rect x="253" y="559" width="207" height="48" fill="#3a302a"/><rect x="1066" y="559" width="208" height="48" fill="#3a302a"/>
    <rect x="480" y="588" width="569" height="4" fill="#a6b266"/>
  <!-- EU text -->
    <g font-size="21.300" fill="#2f4b93" text-anchor="end">
      <text x="431" y="332.800" textLength="122.200" lengthAdjust="spacingAndGlyphs">Co-funded by the</text>
      <text x="431" y="357.800" textLength="159.700" lengthAdjust="spacingAndGlyphs">Erasmus+ Programme</text>
      <text x="431" y="383" textLength="159.700" lengthAdjust="spacingAndGlyphs">of the European Union</text>
    </g>
    <!-- EU stars -->
    <g fill="#f5d31d" font-size="9.500" text-anchor="middle">
      <text x="481.2" y="331.9">★</text><text x="489.9" y="335.1">★</text><text x="496.2" y="343.9">★</text><text x="498.5" y="355.9">★</text><text x="496.2" y="367.9">★</text><text x="489.9" y="376.7">★</text><text x="481.2" y="379.9">★</text><text x="472.6" y="376.7">★</text><text x="466.3" y="367.9">★</text><text x="464.0" y="355.9">★</text><text x="466.3" y="343.9">★</text><text x="472.6" y="335.1">★</text>
    </g>
    <!-- card text -->
    <g class="ser" text-anchor="middle">
      <text class="ser" x="763.300" y="492.700" font-size="36" font-style="italic" font-weight="bold" fill="#a63a3f" textLength="148" lengthAdjust="spacingAndGlyphs">DITECH</text>
      <text class="ser" x="763" y="522.800" font-size="20.800" font-weight="bold" fill="#222" textLength="394" lengthAdjust="spacingAndGlyphs">Developing and Implementing Technology-</text>
      <text class="ser" x="763" y="547.700" font-size="20.800" font-weight="bold" fill="#222" textLength="470" lengthAdjust="spacingAndGlyphs">Enhanced Teaching and Learning at Georgian HEIs</text>
      <text class="ser" x="763.500" y="570" font-size="17" fill="#222" textLength="313" lengthAdjust="spacingAndGlyphs">618766-EPP-1-2020-1-EE-EPPKA2-CBHE-JP</text>
      <text class="ser" x="763.500" y="626.200" font-size="21" font-weight="bold" fill="#b6232b" textLength="300" lengthAdjust="spacingAndGlyphs">Consortium Kick Off Meeting #1</text>
      <text class="ser" x="763.500" y="663.300" font-size="21" font-weight="bold" fill="#111" textLength="156" lengthAdjust="spacingAndGlyphs">February 25, 2021</text>
      <text class="ser" x="763.300" y="704.300" font-size="23.500" font-weight="bold" fill="#b81d24" textLength="513.700" lengthAdjust="spacingAndGlyphs">Prof. Izabella Petriashvili, National Coordinator</text>
    </g>
  
  </g>
  <g transform="translate(0 390.3)">
    <rect x="35.200" y="0" width="156" height="87.600" fill="url(#tw)"/>
    <rect x="35.200" y="0" width="156" height="4" fill="#d9b27c" opacity=".45"/><rect x="35.200" y="83" width="156" height="4.600" fill="#e0bd8b" opacity=".5"/>
    <rect x="42.100" y="5.200" width="143.300" height="76" fill="#fbfbfc" stroke="#d8c7a6" stroke-width=".600"/>
    <rect x="43.600" y="6.700" width="140.300" height="73" fill="none" stroke="#a7b36a" stroke-width=".500"/>
    <rect x="36" y="40.200" width="9" height="7.800" fill="#3a2d27"/><rect x="181.500" y="40.200" width="9" height="7.800" fill="#3a2d27"/>
    <rect x="35.500" y=".700" width="37.500" height="11.500" fill="#fff"/><rect x="60.300" y="2" width="11.500" height="8.800" fill="#2e4d9c"/>
    <circle cx="65.900" cy="6.400" r="2.600" fill="none" stroke="#e9d44a" stroke-width=".500" stroke-dasharray=".500 .860"/>
    <g font-size="2.300" fill="#3b5aa6" text-anchor="end"><text x="59" y="3.600">Co-funded by the</text><text x="59" y="6.500">Erasmus+ Programme</text><text x="59" y="9.400">of the European Union</text></g>
    <circle cx="182.900" cy="7.700" r="7.800" fill="#fff"/><circle cx="182.900" cy="7.700" r="7.500" fill="#3a72b4"/><circle cx="182.900" cy="7.700" r="5.600" fill="#9dbde3"/><circle cx="182.900" cy="7.700" r="3.600" fill="#5a8cc6"/><ellipse cx="182.700" cy="7.800" rx="2.500" ry="1.900" fill="#fff"/>
    <g class="ser" font-weight="bold" fill="#b6232b" text-anchor="middle">
      <text class="ser" x="114.700" y="18" font-size="5.200" textLength="87" lengthAdjust="spacingAndGlyphs">Introduction of the WP1 (Preparation):</text>
      <text class="ser" x="114.300" y="24.500" font-size="5.200" textLength="75.500" lengthAdjust="spacingAndGlyphs">overview, main tasks and activities</text>
    </g>
    <text class="ser" x="52.600" y="30" font-size="4.400" font-weight="bold" fill="#b6232b" text-decoration="underline" textLength="18" lengthAdjust="spacingAndGlyphs">Contents</text>
    <rect x="52.600" y="30.800" width="121" height=".500" fill="#8c9c3c"/>
    <g class="ser" font-size="3.300" fill="#222" font-weight="bold">
      <text class="ser" x="53.500" y="36.800" textLength="88" lengthAdjust="spacingAndGlyphs">•  WP description; Related assumptions and risks; Timeline</text>
      <text class="ser" x="53.500" y="43.400" font-size="4.200" font-weight="normal" textLength="62.500" lengthAdjust="spacingAndGlyphs">•  Lead &amp; Participating Organizations</text>
      <text class="ser" x="53.500" y="49.300" textLength="12" lengthAdjust="spacingAndGlyphs">•  Costs</text>
      <text class="ser" x="53.500" y="55.500" textLength="112" lengthAdjust="spacingAndGlyphs">•  Tasks &amp; Activities; Deliverables/results/outcomes; Target groups;</text>
      <text class="ser" x="56.800" y="60.200" font-size="4" font-weight="normal" textLength="29.500" lengthAdjust="spacingAndGlyphs">Dissemination level</text>
    </g>
  </g>
  <g transform="translate(0 496.7)">
    <rect x="35.200" y="0" width="156" height="87.600" fill="url(#tw)"/>
    <rect x="35.200" y="0" width="156" height="4" fill="#d9b27c" opacity=".45"/><rect x="35.200" y="83" width="156" height="4.600" fill="#e0bd8b" opacity=".5"/>
    <rect x="42.100" y="5.200" width="143.300" height="76" fill="#fbfbfc" stroke="#d8c7a6" stroke-width=".600"/>
    <rect x="43.600" y="6.700" width="140.300" height="73" fill="none" stroke="#a7b36a" stroke-width=".500"/>
    <rect x="36" y="40.200" width="9" height="7.800" fill="#3a2d27"/><rect x="181.500" y="40.200" width="9" height="7.800" fill="#3a2d27"/>
    <rect x="35.500" y=".700" width="37.500" height="11.500" fill="#fff"/><rect x="60.300" y="2" width="11.500" height="8.800" fill="#2e4d9c"/>
    <circle cx="65.900" cy="6.400" r="2.600" fill="none" stroke="#e9d44a" stroke-width=".500" stroke-dasharray=".500 .860"/>
    <g font-size="2.300" fill="#3b5aa6" text-anchor="end"><text x="59" y="3.600">Co-funded by the</text><text x="59" y="6.500">Erasmus+ Programme</text><text x="59" y="9.400">of the European Union</text></g>
    <circle cx="182.900" cy="7.700" r="7.800" fill="#fff"/><circle cx="182.900" cy="7.700" r="7.500" fill="#3a72b4"/><circle cx="182.900" cy="7.700" r="5.600" fill="#9dbde3"/><circle cx="182.900" cy="7.700" r="3.600" fill="#5a8cc6"/><ellipse cx="182.700" cy="7.800" rx="2.500" ry="1.900" fill="#fff"/>
    <text class="ser" x="113" y="15.600" font-size="4.600" font-weight="bold" fill="#b6232b" text-anchor="middle" textLength="34" lengthAdjust="spacingAndGlyphs">WP description</text>
    <g class="ser" font-size="2.700" fill="#1c1c1c" stroke="#1c1c1c" stroke-width=".100">
      <text class="ser" x="52.500" y="21.600" font-weight="bold" textLength="117" lengthAdjust="spacingAndGlyphs">Setting up a Steering Committee for the preparation, management and implementation of</text>
      <text class="ser" x="52.500" y="24.800" font-weight="bold" textLength="22" lengthAdjust="spacingAndGlyphs">project activities</text>
      <text class="ser" x="53.500" y="30.300" text-decoration="underline" textLength="125" lengthAdjust="spacingAndGlyphs">› Steering committee will be set up with one member from each EU and EE partners, for</text>
      <text class="ser" x="56.500" y="34.600" textLength="93" lengthAdjust="spacingAndGlyphs">the preparation and management issues throughout the project life.</text>
      <text class="ser" x="53.500" y="39.800" textLength="118" lengthAdjust="spacingAndGlyphs">› All partners will agree on the general methodological framework for designing new</text>
      <text class="ser" x="56.500" y="43.500" textLength="107" lengthAdjust="spacingAndGlyphs">online courses and training teachers for the tuition and online instruction.</text>
      <text class="ser" x="53.500" y="49.800" textLength="106" lengthAdjust="spacingAndGlyphs">› The goal is to combine existing methodologies, practices of EU partner HEIs</text>
      <text class="ser" x="56.500" y="53.600" textLength="108" lengthAdjust="spacingAndGlyphs">in the context of boosting motivation and enhancing technological/professional</text>
      <text class="ser" x="56.500" y="57.500" textLength="118" lengthAdjust="spacingAndGlyphs">competences in higher education, as well as current innovation development issues in</text>
      <text class="ser" x="56.500" y="61.400" textLength="14" lengthAdjust="spacingAndGlyphs">GE HEIs.</text>
      <text class="ser" x="53.500" y="67.400" textLength="105" lengthAdjust="spacingAndGlyphs">› The goal is to provide a transferable environment and support for application</text>
      <text class="ser" x="56.500" y="71" textLength="116" lengthAdjust="spacingAndGlyphs">infrastructure for the achievement of the project’s objectives identified for all the WPs,</text>
      <text class="ser" x="56.500" y="74.800" textLength="118" lengthAdjust="spacingAndGlyphs">meeting with teams responsible for each WP/representatives of the project consortia</text>
    </g>
  </g>
  <g transform="translate(0 602.6)">
    <rect x="35.200" y="0" width="156" height="87.600" fill="url(#tw)"/>
    <rect x="35.200" y="0" width="156" height="4" fill="#d9b27c" opacity=".45"/><rect x="35.200" y="83" width="156" height="4.600" fill="#e0bd8b" opacity=".5"/>
    <rect x="42.100" y="5.200" width="143.300" height="76" fill="#fbfbfc" stroke="#d8c7a6" stroke-width=".600"/>
    <rect x="43.600" y="6.700" width="140.300" height="73" fill="none" stroke="#a7b36a" stroke-width=".500"/>
    <rect x="36" y="40.200" width="9" height="7.800" fill="#3a2d27"/><rect x="181.500" y="40.200" width="9" height="7.800" fill="#3a2d27"/>
    <rect x="35.500" y=".700" width="37.500" height="11.500" fill="#fff"/><rect x="60.300" y="2" width="11.500" height="8.800" fill="#2e4d9c"/>
    <circle cx="65.900" cy="6.400" r="2.600" fill="none" stroke="#e9d44a" stroke-width=".500" stroke-dasharray=".500 .860"/>
    <g font-size="2.300" fill="#3b5aa6" text-anchor="end"><text x="59" y="3.600">Co-funded by the</text><text x="59" y="6.500">Erasmus+ Programme</text><text x="59" y="9.400">of the European Union</text></g>
    <circle cx="182.900" cy="7.700" r="7.800" fill="#fff"/><circle cx="182.900" cy="7.700" r="7.500" fill="#3a72b4"/><circle cx="182.900" cy="7.700" r="5.600" fill="#9dbde3"/><circle cx="182.900" cy="7.700" r="3.600" fill="#5a8cc6"/><ellipse cx="182.700" cy="7.800" rx="2.500" ry="1.900" fill="#fff"/>
    <text class="ser" x="113.200" y="20.600" font-size="7.300" font-weight="bold" fill="#b6232b" text-anchor="middle" textLength="95.500" lengthAdjust="spacingAndGlyphs">Related Assumptions and Risks</text>
    <g class="ser" font-size="3" fill="#1c1c1c" stroke="#1c1c1c" stroke-width=".100">
      <text class="ser" x="52.500" y="28.500" font-weight="bold" textLength="20" lengthAdjust="spacingAndGlyphs">Assumptions</text>
      <text class="ser" x="52.500" y="34" textLength="121" lengthAdjust="spacingAndGlyphs">- Consortium members are motivated and interested in taking part in project activities</text>
      <text class="ser" x="52.500" y="38.700" textLength="77" lengthAdjust="spacingAndGlyphs">and use of technology-enhanced teaching and learning.</text>
      <text class="ser" x="54.500" y="43.900" textLength="114" lengthAdjust="spacingAndGlyphs">- Consortium partner institutions are ready and willing to allow staff time to engage</text>
      <text class="ser" x="52.500" y="47.900" textLength="82" lengthAdjust="spacingAndGlyphs">with the project and to promote the proposed action plans.</text>
      <text class="ser" x="53.500" y="54" font-weight="bold" textLength="9" lengthAdjust="spacingAndGlyphs">Risks:</text>
      <text class="ser" x="54.500" y="59.700" textLength="49" lengthAdjust="spacingAndGlyphs">- Technological Readiness of faculty;</text>
      <text class="ser" x="54.500" y="65.200" textLength="108" lengthAdjust="spacingAndGlyphs">- Delay in purchasing the equipment due to prolonged procurement procedures</text>
      <text class="ser" x="53.500" y="71.300" font-weight="bold" textLength="48" lengthAdjust="spacingAndGlyphs">Estimated Start Date: 15-01-2021</text>
      <text class="ser" x="53.500" y="76.200" font-weight="bold" textLength="47" lengthAdjust="spacingAndGlyphs">Estimated End Date: 14-03-2021</text>
    </g>
  </g>
  <g transform="translate(0 709.6)">
    <rect x="35.200" y="0" width="156" height="87.600" fill="url(#tw)"/>
    <rect x="35.200" y="0" width="156" height="4" fill="#d9b27c" opacity=".45"/><rect x="35.200" y="83" width="156" height="4.600" fill="#e0bd8b" opacity=".5"/>
    <rect x="42.100" y="5.200" width="143.300" height="76" fill="#fbfbfc" stroke="#d8c7a6" stroke-width=".600"/>
    <rect x="43.600" y="6.700" width="140.300" height="73" fill="none" stroke="#a7b36a" stroke-width=".500"/>
    <rect x="36" y="40.200" width="9" height="7.800" fill="#3a2d27"/><rect x="181.500" y="40.200" width="9" height="7.800" fill="#3a2d27"/>
    <rect x="35.500" y=".700" width="37.500" height="11.500" fill="#fff"/><rect x="60.300" y="2" width="11.500" height="8.800" fill="#2e4d9c"/>
    <circle cx="65.900" cy="6.400" r="2.600" fill="none" stroke="#e9d44a" stroke-width=".500" stroke-dasharray=".500 .860"/>
    <g font-size="2.300" fill="#3b5aa6" text-anchor="end"><text x="59" y="3.600">Co-funded by the</text><text x="59" y="6.500">Erasmus+ Programme</text><text x="59" y="9.400">of the European Union</text></g>
    <circle cx="182.900" cy="7.700" r="7.800" fill="#fff"/><circle cx="182.900" cy="7.700" r="7.500" fill="#3a72b4"/><circle cx="182.900" cy="7.700" r="5.600" fill="#9dbde3"/><circle cx="182.900" cy="7.700" r="3.600" fill="#5a8cc6"/><ellipse cx="182.700" cy="7.800" rx="2.500" ry="1.900" fill="#fff"/>
    <g class="ser" font-weight="bold" fill="#b6232b" text-anchor="middle">
      <text class="ser" x="113" y="13" font-size="4.800" textLength="78" lengthAdjust="spacingAndGlyphs">Lead &amp; Participating Organizations</text>
      <text class="ser" x="113.500" y="19" font-size="4.800" textLength="12.500" lengthAdjust="spacingAndGlyphs">Costs</text>
    </g>
    <rect x="52.600" y="30.600" width="121" height=".500" fill="#8c9c3c"/>
    <g class="ser" font-size="2.900" fill="#1c1c1c" stroke="#1c1c1c" stroke-width=".100">
      <text class="ser" x="53.500" y="23" font-weight="bold" textLength="40" lengthAdjust="spacingAndGlyphs">› Lead Organization: TSU</text>
      <text class="ser" x="53.500" y="28" font-weight="bold" textLength="65" lengthAdjust="spacingAndGlyphs">› Participating Organizations: All Partners</text>
      <text class="ser" x="53.500" y="33.300" textLength="12" lengthAdjust="spacingAndGlyphs">› Costs:</text>
      <text class="ser" x="53.500" y="38.800" textLength="105" lengthAdjust="spacingAndGlyphs">•  Staff costs: EUR 22,460.00 necessary for all the activities, preparation and</text>
      <text class="ser" x="56.500" y="42" textLength="56" lengthAdjust="spacingAndGlyphs">management issues (for SME and CM).</text>
      <text class="ser" x="53.500" y="47.300" textLength="112" lengthAdjust="spacingAndGlyphs">•  Travel costs (EUR 5, 225.00) and Costs of Stay (EUR 17,400.00) necessary for</text>
      <text class="ser" x="56.500" y="51" textLength="82" lengthAdjust="spacingAndGlyphs">grant-holder’s , national, and kick-off consortium meetings.</text>
      <text class="ser" x="53.500" y="56" textLength="112" lengthAdjust="spacingAndGlyphs">•  Equipment: hardware and (software) (total sum EUR 31, 235.00) necessary for</text>
      <text class="ser" x="56.500" y="59.800" textLength="115" lengthAdjust="spacingAndGlyphs">Georgian institutions to support piloting of new courses, conducting trainings, and</text>
      <text class="ser" x="56.500" y="63.200" textLength="60" lengthAdjust="spacingAndGlyphs">enhancing quality of teaching and learning.</text>
      <text class="ser" x="53.500" y="68.600" font-weight="bold" textLength="57" lengthAdjust="spacingAndGlyphs">•  Total costs for WP1 – EUR 96,594.00.</text>
    </g>
    <circle cx="140.500" cy="50.300" r="1.100" fill="#f2b53a"/>
  </g>
  <g clip-path="url(#thclip)">
  <g transform="translate(0 815.5)">
    <rect x="35.200" y="0" width="156" height="87.600" fill="url(#tw)"/>
    <rect x="35.200" y="0" width="156" height="4" fill="#d9b27c" opacity=".45"/><rect x="35.200" y="83" width="156" height="4.600" fill="#e0bd8b" opacity=".5"/>
    <rect x="42.100" y="5.200" width="143.300" height="76" fill="#fbfbfc" stroke="#d8c7a6" stroke-width=".600"/>
    <rect x="43.600" y="6.700" width="140.300" height="73" fill="none" stroke="#a7b36a" stroke-width=".500"/>
    <rect x="36" y="40.200" width="9" height="7.800" fill="#3a2d27"/><rect x="181.500" y="40.200" width="9" height="7.800" fill="#3a2d27"/>
    <rect x="35.500" y=".700" width="37.500" height="11.500" fill="#fff"/><rect x="60.300" y="2" width="11.500" height="8.800" fill="#2e4d9c"/>
    <circle cx="65.900" cy="6.400" r="2.600" fill="none" stroke="#e9d44a" stroke-width=".500" stroke-dasharray=".500 .860"/>
    <g font-size="2.300" fill="#3b5aa6" text-anchor="end"><text x="59" y="3.600">Co-funded by the</text><text x="59" y="6.500">Erasmus+ Programme</text><text x="59" y="9.400">of the European Union</text></g>
    <circle cx="182.900" cy="7.700" r="7.800" fill="#fff"/><circle cx="182.900" cy="7.700" r="7.500" fill="#3a72b4"/><circle cx="182.900" cy="7.700" r="5.600" fill="#9dbde3"/><circle cx="182.900" cy="7.700" r="3.600" fill="#5a8cc6"/><ellipse cx="182.700" cy="7.800" rx="2.500" ry="1.900" fill="#fff"/>
    <g class="ser" font-weight="bold" fill="#c0312f" text-anchor="middle">
      <text class="ser" x="112" y="14.200" font-size="4" textLength="35" lengthAdjust="spacingAndGlyphs">Tasks &amp; Activities</text>
      <text class="ser" x="112" y="19.600" font-size="4.100" textLength="60" lengthAdjust="spacingAndGlyphs">Deliverables/results/outcomes</text>
      <text class="ser" x="112" y="25.200" font-size="4.100" textLength="68" lengthAdjust="spacingAndGlyphs">Target groups; Dissemination level</text>
    </g>
    <rect x="52.600" y="30.600" width="121" height=".500" fill="#8c9c3c"/>
    <g class="ser" font-size="2.900" fill="#555">
      <text class="ser" x="58.500" y="36.300" textLength="31" lengthAdjust="spacingAndGlyphs">1.1 Grant holder meeting</text>
      <text class="ser" x="58.500" y="41.900" fill="#2b2b2b" textLength="69" lengthAdjust="spacingAndGlyphs">1.2 National Meeting of the 1 st DITECH GE partners</text>
      <text class="ser" x="58.500" y="47.500" textLength="63" lengthAdjust="spacingAndGlyphs">1.3 Consortium meeting (CM) 1: kick-off meeting</text>
      <text class="ser" x="58.500" y="53.200" textLength="55" lengthAdjust="spacingAndGlyphs">1.4  Purchase and installation of equipment</text>
    </g>
    <circle cx="93" cy="35.200" r="1.300" fill="#4bbf4e"/><circle cx="131.500" cy="40.600" r="1.300" fill="#4bbf4e"/><circle cx="125" cy="46.300" r="1.300" fill="#4bbf4e"/>
  </g>
  </g>
</svg>
<!--THUMBS-END-->

<!-- ================= VIDEO TILES ================= -->
<!--TILES-START-->
<!-- ===== participant video tiles (vector approximations) ===== -->
<svg width="0" height="0" style="position:absolute"><defs><filter id="tb" x="-5%" y="-5%" width="110%" height="110%"><feGaussianBlur stdDeviation="1.500"/></filter></defs></svg>
<div class="tile" style="left:1412px;top:112px;background:#9fada6;">
<svg width="208" height="117" viewBox="0 0 208 117"><g filter="url(#tb)">
  <rect x="-12" y="-12" width="87" height="141" fill="#2b2d2b"/>
  <rect x="2" y="12" width="26" height="90" fill="#42565a"/>
  <rect x="36" y="12" width="30" height="90" fill="#4a6062"/>
  <rect x="12" y="40" width="14" height="50" fill="#a9bcbc" opacity="0.5"/>
  <rect x="40" y="55" width="18" height="40" fill="#b5c6c6" opacity="0.45"/>
  <rect x="26" y="-12" width="9" height="141" fill="#1d1d1e"/>
  <rect x="-12" y="-12" width="87" height="21" fill="#2a2420"/>
  <rect x="118" y="-12" width="102" height="141" fill="#a9b6ae"/>
  <ellipse cx="160" cy="40" rx="30" ry="30" fill="#98a79f" opacity="0.6"/>
  <ellipse cx="185" cy="90" rx="25" ry="25" fill="#b4c0b7" opacity="0.6"/>
  <polygon points="150,95 195,92 200,129 150,129" fill="#23232f"/>
  <ellipse cx="176" cy="104" rx="12" ry="8" fill="#8f8fa0" opacity="0.5"/>
  <polygon points="30,129 40,96 70,82 120,80 150,92 170,129" fill="#e2b83b"/>
  <polygon points="66,66 108,62 112,92 64,92" fill="#e6bd40"/>
  <ellipse cx="86" cy="30" rx="31" ry="34" fill="#2a1c18"/>
  <polygon points="55,30 60,95 72,98 74,40" fill="#2c1d19"/>
  <polygon points="100,20 120,30 118,70 104,92 98,60" fill="#2b1c18"/>
  <ellipse cx="85" cy="44" rx="18.5" ry="27" fill="#dcab97"/>
  <ellipse cx="80" cy="42" rx="10" ry="14" fill="#e9c2b1" opacity="0.6"/>
  <ellipse cx="77" cy="38" rx="4" ry="1.8" fill="#3a2420" opacity="0.85"/>
  <ellipse cx="93" cy="38" rx="4" ry="1.8" fill="#3a2420" opacity="0.85"/>
  <ellipse cx="85" cy="50" rx="2.5" ry="4" fill="#c08c78" opacity="0.6"/>
  <ellipse cx="84" cy="62" rx="6" ry="1.8" fill="#a8454a"/>
</g>
<rect x=".700" y="97.500" width="144.3" height="19.500" fill="#141414" opacity=".78"/>
<g transform="translate(0 97.5)"><rect x="7" y="3.500" width="5.600" height="9.300" rx="2.700" fill="#f05a55"/><path d="M9.800 12.500 v2 M7.300 14.700 h5.200" stroke="#f05a55" stroke-width="1.500" fill="none"/><path d="M3.300 16 L17 2.500" stroke="#f05a55" stroke-width="1.500"/></g>
<text x="22" y="112" font-size="12.700" fill="#fff" textLength="119" lengthAdjust="spacingAndGlyphs">Tamar TeSaU Aslan...</text>
</svg></div>
<div class="tile" style="left:1626px;top:112px;background:#c9c9c6;">
<svg width="208" height="117" viewBox="0 0 208 117"><g filter="url(#tb)">
  <ellipse cx="10" cy="60" rx="70" ry="90" fill="#babab7" opacity="0.8"/>
  <ellipse cx="200" cy="80" rx="80" ry="70" fill="#d6d6d3" opacity="0.8"/>
  <polygon points="40,-12 185,-12 186,30 170,33 38,5" fill="#9a9c90"/>
  <polygon points="48,-12 180,-12 180,26 50,3" fill="#4f5038"/>
  <ellipse cx="150" cy="10" rx="22" ry="8" fill="#8a8a48" opacity="0.7"/>
  <polygon points="-12,-12 25,-12 24,4 -12,3" fill="#8e8e86"/>
  <ellipse cx="121" cy="52" rx="33" ry="40" fill="#6b4a38"/>
  <polygon points="92,50 96,88 106,92 104,50" fill="#5f4232"/>
  <polygon points="140,40 152,70 146,88 134,80" fill="#654636"/>
  <ellipse cx="120" cy="62" rx="21" ry="29" fill="#cc9a8e"/>
  <ellipse cx="114" cy="66" rx="10" ry="14" fill="#d8aa9e" opacity="0.6"/>
  <rect x="97" y="37" width="46" height="5" fill="#734c3a"/>
  <path d="M98 45 h18 v7 h-18 z M122 46 h18 v7 h-18 z M116 47 h6" fill="none" stroke="#2a1a18" stroke-width="1.6" opacity="0.9"/>
  <ellipse cx="114" cy="67" rx="6" ry="1.6" fill="#9c5458"/>
  <polygon points="75,129 82,98 110,92 140,90 150,84 175,80 195,100 205,129" fill="#1c1a1d"/>
  <polygon points="100,92 138,90 130,112 108,112" fill="#c59488"/>
</g>
<rect x=".700" y="97.500" width="82.3" height="19.500" fill="#141414" opacity=".78"/>
<g transform="translate(0 97.5)"><rect x="7" y="3.500" width="5.600" height="9.300" rx="2.700" fill="#f05a55"/><path d="M9.800 12.500 v2 M7.300 14.700 h5.200" stroke="#f05a55" stroke-width="1.500" fill="none"/><path d="M3.300 16 L17 2.500" stroke="#f05a55" stroke-width="1.500"/></g>
<text x="22" y="112" font-size="12.700" fill="#fff" textLength="57.5" lengthAdjust="spacingAndGlyphs">Aira Lepik</text>
</svg></div>
<div class="tile" style="left:1412px;top:235px;background:#cfae72;">
<svg width="208" height="117" viewBox="0 0 208 117"><g filter="url(#tb)">
  <rect x="-12" y="-12" width="18" height="141" fill="#b06a36"/>
  <rect x="4" y="-12" width="42" height="141" fill="#fff4dc"/>
  <rect x="14" y="-12" width="12" height="141" fill="#fffbee"/>
  <rect x="36" y="-12" width="10" height="112" fill="#f7d9a4"/>
  <rect x="45" y="-12" width="44" height="141" fill="#e0963a"/>
  <rect x="60" y="-12" width="10" height="141" fill="#e8a548" opacity="0.7"/>
  <rect x="88" y="-12" width="132" height="141" fill="#d4b478"/>
  <rect x="88" y="-12" width="132" height="16" fill="#3d3a30"/>
  <rect x="88" y="4" width="132" height="2.5" fill="#e6cc96"/>
  <rect x="135" y="26" width="85" height="2.5" fill="#e9d09c"/>
  <rect x="135" y="50" width="85" height="2.5" fill="#e9d09c"/>
  <rect x="135" y="74" width="85" height="2.5" fill="#e9d09c"/>
  <rect x="157" y="-12" width="3" height="112" fill="#e6cc96"/>
  <rect x="162" y="9" width="18" height="16" fill="#2e3230"/>
  <rect x="172" y="8" width="24" height="17" fill="#e8e6e0"/>
  <rect x="196" y="9" width="24" height="16" fill="#3a3c3a"/>
  <rect x="136" y="13" width="18" height="13" fill="#b59a68"/>
  <rect x="140" y="38" width="16" height="12" fill="#8c3a30" opacity="0.8"/>
  <rect x="176" y="40" width="14" height="9" fill="#8fa0b8"/>
  <rect x="200" y="32" width="20" height="17" fill="#b8504a"/>
  <rect x="161" y="56" width="40" height="18" fill="#5a4a44"/>
  <rect x="165" y="57" width="6" height="17" fill="#2c3a6a"/>
  <rect x="178" y="57" width="5" height="17" fill="#a8423a"/>
  <rect x="188" y="58" width="10" height="16" fill="#d8d4c8"/>
  <rect x="136" y="58" width="20" height="16" fill="#a89058"/>
  <ellipse cx="152" cy="70" rx="4" ry="3" fill="#e0b820"/>
  <rect x="167" y="65" width="15" height="9" fill="#eeeae2"/>
  <rect x="198" y="72" width="22" height="57" fill="#17171a"/>
  <rect x="178" y="80" width="20" height="20" fill="#5a4a38" opacity="0.7"/>
  <polygon points="30,129 34,82 60,82 62,129" fill="#a3a19c"/>
  <rect x="34" y="82" width="26" height="3" fill="#3a3a3a"/>
  <ellipse cx="108" cy="36" rx="30" ry="25" fill="#2a1b1c"/>
  <polygon points="78,40 84,60 92,58 90,36" fill="#2a1b1c"/>
  <polygon points="128,30 138,50 132,60 126,50" fill="#2a1b1c"/>
  <ellipse cx="110" cy="62" rx="22.5" ry="30" fill="#dba392"/>
  <ellipse cx="104" cy="64" rx="11" ry="15" fill="#e6b4a4" opacity="0.6"/>
  <polygon points="86,30 134,30 134,44 86,44" fill="#2d1d1e" opacity="0.85"/>
  <path d="M88 47 h19 v7 h-19 z M113 47 h19 v7 h-19 z M107 49 h6" fill="none" stroke="#1a1214" stroke-width="1.7"/>
  <ellipse cx="108" cy="70" rx="7" ry="2.2" fill="#8c2434"/>
  <polygon points="52,129 60,86 88,74 100,80 106,129" fill="#1b2038"/>
  <polygon points="118,129 124,82 136,74 178,84 190,129" fill="#1b2038"/>
  <polygon points="96,88 128,88 124,129 102,129" fill="#e4d2d2"/>
</g>
<rect x=".700" y="97.500" width="112.8" height="19.500" fill="#141414" opacity=".78"/>
<text x="4" y="112" font-size="12.700" fill="#fff" textLength="106" lengthAdjust="spacingAndGlyphs">Izabela Petriashvili</text>
</svg></div>
<div class="tile" style="left:1626px;top:235px;background:#e6dcc0;">
<svg width="208" height="117" viewBox="0 0 208 117"><g filter="url(#tb)">
  <rect x="26" y="-12" width="40" height="141" fill="#e9e2cc"/>
  <rect x="150" y="-12" width="34" height="141" fill="#e3d5b0"/>
  <polygon points="118,-12 182,-12 182,18 140,24" fill="#e8e4dc"/>
  <path d="M120 0 L140 23 L182 17" fill="none" stroke="#f4f2ee" stroke-width="2"/>
  <rect x="27" y="-12" width="7" height="32" fill="#8c2a2c"/>
  <rect x="60" y="-12" width="58" height="141" fill="#2b140f"/>
  <rect x="118" y="24" width="40" height="105" fill="#2a130e"/>
  <rect x="68" y="6" width="38" height="84" fill="#4a2016" opacity="0.8"/>
  <rect x="124" y="32" width="26" height="66" fill="#45201a" opacity="0.7"/>
  <ellipse cx="104" cy="78" rx="5" ry="20" fill="#e4dcec" opacity="0.9"/>
  <ellipse cx="100" cy="55" rx="4" ry="16" fill="#a87868" opacity="0.6"/>
  <ellipse cx="133" cy="90" rx="5" ry="10" fill="#8a5a4a" opacity="0.5"/>
  <rect x="160" y="54" width="10" height="9" fill="#3a2a22"/>
  <rect x="171" y="65" width="9" height="11" fill="#4a3a30"/>
  <rect x="161" y="90" width="14" height="39" fill="#5a4428"/>
  <ellipse cx="66" cy="62" rx="31" ry="30" fill="#5f4832"/>
  <ellipse cx="76" cy="72" rx="18" ry="20" fill="#523c28"/>
  <ellipse cx="58" cy="46" rx="20" ry="12" fill="#705840" opacity="0.8"/>
  <ellipse cx="50" cy="74" rx="17" ry="25" fill="#dcae98"/>
  <polygon points="34,60 60,52 66,70 60,96 40,96" fill="#dcae98"/>
  <path d="M33 60 q8 -6 20 -2 M36 58 v6 q6 3 12 0 v-6" fill="none" stroke="#4a3a3a" stroke-width="1.4" opacity="0.85"/>
  <polygon points="26,129 27,96 40,90 80,90 100,94 116,129" fill="#6c6e72"/>
  <rect x="-12" y="-12" width="38" height="141" fill="#000"/>
  <rect x="182" y="-12" width="38" height="141" fill="#000"/>
</g>
<rect x=".700" y="97.500" width="140.3" height="19.500" fill="#141414" opacity=".78"/>
<g transform="translate(0 97.5)"><rect x="7" y="3.500" width="5.600" height="9.300" rx="2.700" fill="#f05a55"/><path d="M9.800 12.500 v2 M7.300 14.700 h5.200" stroke="#f05a55" stroke-width="1.500" fill="none"/><path d="M3.300 16 L17 2.500" stroke="#f05a55" stroke-width="1.500"/></g>
<text x="22" y="112" font-size="12.700" fill="#fff" textLength="114" lengthAdjust="spacingAndGlyphs">Manana Salukvadze</text>
</svg></div>
<div class="tile" style="left:1412px;top:358px;background:#9b99a9;">
<svg width="208" height="117" viewBox="0 0 208 117"><g filter="url(#tb)">
  <rect x="-12" y="-12" width="232" height="20" fill="#b9b9c1"/>
  <rect x="-12" y="8" width="232" height="4" fill="#8a8898"/>
  <rect x="-12" y="18" width="62" height="111" fill="#e9e4d2"/>
  <rect x="-12" y="32" width="54" height="97" fill="#f1eee2"/>
  <rect x="-12" y="40" width="44" height="62" fill="#36404c"/>
  <rect x="18" y="40" width="4" height="62" fill="#ece8da"/>
  <rect x="-12" y="47" width="44" height="3" fill="#ece8da"/>
  <ellipse cx="10" cy="80" rx="10" ry="16" fill="#1f3a46" opacity="0.8"/>
  <rect x="135" y="27" width="46" height="102" fill="#ece6d2"/>
  <polygon points="139,40 150,36 172,48 176,129 139,129" fill="#3a3f38"/>
  <ellipse cx="158" cy="70" rx="8" ry="18" fill="#8a8050" opacity="0.7"/>
  <ellipse cx="165" cy="100" rx="8" ry="12" fill="#2c3054" opacity="0.8"/>
  <ellipse cx="106" cy="42" rx="31" ry="36" fill="#6b4434"/>
  <polygon points="124,30 150,80 158,129 128,129 126,70" fill="#69422f"/>
  <polygon points="78,40 80,80 86,82 84,40" fill="#6b4434"/>
  <ellipse cx="103" cy="60" rx="24" ry="34" fill="#dcae9e"/>
  <ellipse cx="100" cy="58" rx="14" ry="20" fill="#e8c0b2" opacity="0.6"/>
  <rect x="82" y="22" width="40" height="12" fill="#74493a" opacity="0.9"/>
  <path d="M79 46 q0 16 12 16 q12 0 12 -14 q-12 -4 -24 -2 z M107 48 q0 15 12 15 q11 0 11 -15 q-12 -3 -23 0 z" fill="none" stroke="#4a2028" stroke-width="1.4"/>
  <ellipse cx="101" cy="77" rx="7" ry="2" fill="#b8686c"/>
  <polygon points="78,129 80,84 90,96 120,98 132,86 136,129" fill="#272d42"/>
  <path d="M80 70 Q82 100 84 117 M127 74 Q126 100 120 117" fill="none" stroke="#e8e8ee" stroke-width="1"/>
</g>
<rect x=".700" y="97.500" width="80.3" height="19.500" fill="#141414" opacity=".78"/>
<g transform="translate(0 97.5)"><rect x="7" y="3.500" width="5.600" height="9.300" rx="2.700" fill="#f05a55"/><path d="M9.800 12.500 v2 M7.300 14.700 h5.200" stroke="#f05a55" stroke-width="1.500" fill="none"/><path d="M3.300 16 L17 2.500" stroke="#f05a55" stroke-width="1.500"/></g>
<text x="22" y="112" font-size="12.700" fill="#fff" textLength="54.5" lengthAdjust="spacingAndGlyphs">Laura Lee</text>
</svg></div>
<div class="tile" style="left:1626px;top:358px;background:#d6dcc8;">
<svg width="208" height="117" viewBox="0 0 208 117"><g filter="url(#tb)">
  <rect x="-12" y="-12" width="92" height="141" fill="#c4d4c6"/>
  <ellipse cx="120" cy="20" rx="50" ry="30" fill="#e6e2ce"/>
  <rect x="120" y="30" width="30" height="60" fill="#dfdcc8"/>
  <rect x="17" y="26" width="84" height="42" fill="#4a3a30"/>
  <rect x="23" y="30" width="72" height="33" fill="#6f7c6e"/>
  <rect x="24" y="31" width="34" height="14" fill="#7a6238"/>
  <rect x="60" y="31" width="34" height="10" fill="#5a5a40"/>
  <ellipse cx="45" cy="55" rx="14" ry="5" fill="#d8d8d0"/>
  <ellipse cx="68" cy="47" rx="5" ry="5" fill="#eeeae4"/>
  <rect x="148" y="12" width="58" height="117" fill="#96562a"/>
  <rect x="154" y="18" width="48" height="111" fill="#7d3f16"/>
  <rect x="172" y="20" width="3" height="109" fill="#8c4c1e" opacity="0.7"/>
  <rect x="204" y="-12" width="16" height="141" fill="#c9c8b8"/>
  <polygon points="-12,78 70,78 72,129 -12,129" fill="#3a2a24"/>
  <rect x="-12" y="90" width="78" height="4" fill="#5a4034"/>
  <ellipse cx="58" cy="80" rx="8" ry="8" fill="#2a2420"/>
  <ellipse cx="114" cy="54" rx="30" ry="31" fill="#d8c8a4"/>
  <ellipse cx="100" cy="60" rx="14" ry="26" fill="#cdbb94"/>
  <ellipse cx="128" cy="50" rx="14" ry="24" fill="#e2d4b2" opacity="0.7"/>
  <ellipse cx="115" cy="72" rx="20" ry="27" fill="#d3a088"/>
  <ellipse cx="112" cy="70" rx="11" ry="15" fill="#deb09a" opacity="0.6"/>
  <polygon points="92,40 120,28 140,44 136,56 112,46 96,60" fill="#dccda8"/>
  <ellipse cx="106" cy="63" rx="4.5" ry="1.8" fill="#4a3430" opacity="0.8"/>
  <ellipse cx="124" cy="63" rx="4.5" ry="1.8" fill="#4a3430" opacity="0.8"/>
  <ellipse cx="115" cy="74" rx="2.5" ry="4" fill="#bb8a72" opacity="0.6"/>
  <ellipse cx="114" cy="84" rx="6" ry="1.8" fill="#a06064"/>
  <polygon points="60,129 68,84 92,76 100,92 128,92 140,74 162,80 182,129" fill="#1e1c20"/>
  <polygon points="100,92 112,129 104,129 98,100" fill="#d9e2ee"/>
  <polygon points="130,92 128,129 120,129" fill="#cfd8e6"/>
</g>
<rect x=".700" y="97.500" width="144.3" height="19.500" fill="#141414" opacity=".78"/>
<g transform="translate(0 97.5)"><rect x="7" y="3.500" width="5.600" height="9.300" rx="2.700" fill="#f05a55"/><path d="M9.800 12.500 v2 M7.300 14.700 h5.200" stroke="#f05a55" stroke-width="1.500" fill="none"/><path d="M3.300 16 L17 2.500" stroke="#f05a55" stroke-width="1.500"/></g>
<text x="22" y="112" font-size="12.700" fill="#fff" textLength="114" lengthAdjust="spacingAndGlyphs">Tina Gelashvili-SJS...</text>
</svg></div>
<div class="tile" style="left:1412px;top:481px;background:#25221f;">
<svg width="208" height="117" viewBox="0 0 208 117"><g filter="url(#tb)">
  <rect x="-12" y="-12" width="58" height="141" fill="#1c1c1f"/>
  <rect x="46" y="-12" width="70" height="52" fill="#2e2924"/>
  <rect x="46" y="40" width="8" height="89" fill="#1e1a18"/>
  <rect x="55" y="42" width="65" height="87" fill="#453b32"/>
  <ellipse cx="85" cy="60" rx="24" ry="28" fill="#6a5a48" opacity="0.55"/>
  <ellipse cx="84" cy="49" rx="7" ry="9" fill="#fff4d6"/>
  <ellipse cx="84" cy="42" rx="3" ry="3" fill="#ffffff"/>
  <rect x="175" y="38" width="45" height="60" fill="#463c32"/>
  <ellipse cx="196" cy="47" rx="6" ry="7" fill="#fff2d0"/>
  <rect x="150" y="-12" width="70" height="48" fill="#1a1a1c"/>
  <path d="M20 0 L18 26 L31 33 L34 4" fill="none" stroke="#4a4e54" stroke-width="1.4"/>
  <rect x="42" y="-12" width="14" height="32" fill="#3a3a3a"/>
  <polygon points="12,62 26,66 30,98 16,96" fill="#5c5e5e"/>
  <ellipse cx="150" cy="26" rx="42" ry="30" fill="#1b1d21"/>
  <ellipse cx="118" cy="40" rx="8" ry="22" fill="#1b1d21"/>
  <ellipse cx="180" cy="36" rx="8" ry="20" fill="#191b1f"/>
  <ellipse cx="151" cy="60" rx="29" ry="38" fill="#c3a18e"/>
  <ellipse cx="144" cy="52" rx="16" ry="20" fill="#d4b4a2" opacity="0.6"/>
  <polygon points="122,70 130,92 150,100 172,92 178,72 170,84 150,88 132,84" fill="#4a3b35" opacity="0.9"/>
  <ellipse cx="151" cy="76" rx="14" ry="3" fill="#3a2c28" opacity="0.8"/>
  <path d="M126 46 h24 v14 h-22 z M158 50 h24 v14 h-22 z M150 52 h8" fill="none" stroke="#1c1a1c" stroke-width="1.8"/>
  <polygon points="70,129 74,92 110,78 128,96 150,104 176,96 190,80 220,84 220,129" fill="#77797a"/>
  <polygon points="130,98 150,106 172,98 168,129 134,129" fill="#a88a7a" opacity="0.7"/>
</g>
<rect x=".700" y="97.500" width="138.3" height="19.500" fill="#141414" opacity=".78"/>
<g transform="translate(0 97.5)"><rect x="7" y="3.500" width="5.600" height="9.300" rx="2.700" fill="#f05a55"/><path d="M9.800 12.500 v2 M7.300 14.700 h5.200" stroke="#f05a55" stroke-width="1.500" fill="none"/><path d="M3.300 16 L17 2.500" stroke="#f05a55" stroke-width="1.500"/></g>
<text x="22" y="112" font-size="12.700" fill="#fff" textLength="113" lengthAdjust="spacingAndGlyphs">Levan Kvaratskhelia</text>
</svg></div>
<div class="tile" style="left:1626px;top:481px;background:#7d6c4c;">
<svg width="208" height="117" viewBox="0 0 208 117"><g filter="url(#tb)">
  <rect x="-12" y="-12" width="92" height="72" fill="#5e4e30"/>
  <ellipse cx="20" cy="20" rx="40" ry="30" fill="#4f4128" opacity="0.7"/>
  <rect x="80" y="-12" width="140" height="22" fill="#b8ab8a"/>
  <rect x="60" y="10" width="90" height="60" fill="#8a7a5e"/>
  <rect x="-12" y="45" width="54" height="60" fill="#978f66"/>
  <ellipse cx="18" cy="75" rx="18" ry="26" fill="#a9a078" opacity="0.8"/>
  <path d="M10 100 L16 48 M22 100 L34 44 M8 60 L14 70" fill="none" stroke="#5c6a34" stroke-width="1.6" opacity="0.7"/>
  <polygon points="40,52 74,70 74,96 38,96" fill="#2a1a12"/>
  <rect x="146" y="10" width="26" height="68" fill="#1c1214"/>
  <rect x="172" y="10" width="48" height="119" fill="#e6dadc"/>
  <rect x="176" y="40" width="14" height="50" fill="#f4eef0"/>
  <rect x="200" y="8" width="20" height="44" fill="#2a1c1c"/>
  <rect x="192" y="30" width="10" height="40" fill="#c9a8a8" opacity="0.5"/>
  <ellipse cx="108" cy="20" rx="30" ry="20" fill="#7b6038"/>
  <polygon points="80,20 86,40 96,20" fill="#6e5432"/>
  <ellipse cx="120" cy="12" rx="18" ry="10" fill="#8c7044" opacity="0.8"/>
  <ellipse cx="108" cy="48" rx="27" ry="36" fill="#c98f5a"/>
  <ellipse cx="104" cy="44" rx="14" ry="18" fill="#d9a470" opacity="0.6"/>
  <ellipse cx="97" cy="38" rx="6" ry="2.2" fill="#5a3a22" opacity="0.75"/>
  <ellipse cx="120" cy="38" rx="6" ry="2.2" fill="#5a3a22" opacity="0.75"/>
  <ellipse cx="108" cy="50" rx="3" ry="6" fill="#b07a48" opacity="0.6"/>
  <ellipse cx="106" cy="64" rx="8" ry="2" fill="#8e5a3c"/>
  <polygon points="35,102 58,76 88,66 100,84 118,84 132,64 164,70 182,104 184,129 34,129" fill="#c88a2b"/>
  <ellipse cx="80" cy="96" rx="30" ry="14" fill="#d29630" opacity="0.6"/>
  <polygon points="90,68 102,88 116,88 128,66 120,80 100,80" fill="#8a6a48" opacity="0.8"/>
</g>
<rect x=".700" y="97.500" width="144.3" height="19.500" fill="#141414" opacity=".78"/>
<g transform="translate(0 97.5)"><rect x="7" y="3.500" width="5.600" height="9.300" rx="2.700" fill="#f05a55"/><path d="M9.800 12.500 v2 M7.300 14.700 h5.200" stroke="#f05a55" stroke-width="1.500" fill="none"/><path d="M3.300 16 L17 2.500" stroke="#f05a55" stroke-width="1.500"/></g>
<text x="22" y="112" font-size="12.700" fill="#fff" textLength="118.5" lengthAdjust="spacingAndGlyphs">Giga Khositashvili -...</text>
</svg></div>
<div class="tile" style="left:1412px;top:604px;background:#c6d6c2;">
<svg width="208" height="117" viewBox="0 0 208 117"><g filter="url(#tb)">
  <rect x="26" y="-12" width="156" height="141" fill="#c8d8c4"/>
  <rect x="100" y="-12" width="82" height="42" fill="#d3dfcf"/>
  <polygon points="136,34 176,24 182,100 136,100" fill="#98c39a"/>
  <rect x="136" y="40" width="10" height="28" fill="#f4f8f2"/>
  <rect x="172" y="40" width="10" height="50" fill="#9a9a70" opacity="0.7"/>
  <rect x="28" y="6" width="74" height="84" fill="#e8ece8"/>
  <rect x="34" y="24" width="22" height="52" fill="#8d9893"/>
  <rect x="66" y="24" width="16" height="44" fill="#97a29c"/>
  <rect x="58" y="10" width="5" height="76" fill="#f4f6f4"/>
  <ellipse cx="98" cy="32" rx="22" ry="18" fill="#3a2c28"/>
  <ellipse cx="98" cy="50" rx="19.5" ry="27" fill="#c9a090"/>
  <ellipse cx="95" cy="48" rx="10" ry="14" fill="#d8b2a2" opacity="0.6"/>
  <polygon points="78,30 100,18 118,32 114,40 96,30 82,42" fill="#382a26"/>
  <ellipse cx="90" cy="46" rx="4" ry="1.7" fill="#3a2a28" opacity="0.8"/>
  <ellipse cx="105" cy="46" rx="4" ry="1.7" fill="#3a2a28" opacity="0.8"/>
  <ellipse cx="97" cy="54" rx="2.2" ry="3.5" fill="#b48878" opacity="0.6"/>
  <ellipse cx="97" cy="62" rx="6" ry="1.8" fill="#9a5a5a"/>
  <polygon points="28,129 32,92 62,74 82,60 92,80 106,80 114,58 142,68 182,92 182,129" fill="#7d8896"/>
  <polygon points="60,78 80,64 88,84 74,100 50,100" fill="#aab4c0" opacity="0.7"/>
  <polygon points="116,64 140,70 150,90 120,96" fill="#a4aebc" opacity="0.7"/>
  <polygon points="128,88 150,80 182,96 182,129 134,129" fill="#272d3e"/>
  <polygon points="30,92 50,86 60,100 40,129 28,129" fill="#4a5262" opacity="0.8"/>
  <ellipse cx="96" cy="94" rx="14" ry="5" fill="#c9a090"/>
  <rect x="60" y="98" width="60" height="31" fill="#5a5050" opacity="0.8"/>
  <rect x="-12" y="-12" width="38" height="141" fill="#232323"/>
  <rect x="182" y="-12" width="38" height="141" fill="#232323"/>
</g>
<rect x=".700" y="97.500" width="129.3" height="19.500" fill="#141414" opacity=".78"/>
<g transform="translate(0 97.5)"><rect x="7" y="3.500" width="5.600" height="9.300" rx="2.700" fill="#f05a55"/><path d="M9.800 12.500 v2 M7.300 14.700 h5.200" stroke="#f05a55" stroke-width="1.500" fill="none"/><path d="M3.300 16 L17 2.500" stroke="#f05a55" stroke-width="1.500"/></g>
<text x="22" y="112" font-size="12.700" fill="#fff" textLength="103.5" lengthAdjust="spacingAndGlyphs">Maka Murvanidze</text>
</svg></div>
<div class="a" style="left:1621px;top:599px;width:217px;height:126px;border-radius:2px;background:linear-gradient(180deg,#dcee86 0%,#b4e04a 25%,#84d41c 49.900%,#58be12 50%,#86d634 70%,#e6f08e 93%,#f0f49c 100%);"></div>
<div class="a" style="left:1624px;top:602px;width:211px;height:120px;background:linear-gradient(180deg,#e9f3a4,#d6ec7c 50%,#f3f6b0);opacity:.55;"></div>
<div class="tile" style="left:1626px;top:604px;background:#c9a988;">
<svg width="208" height="117" viewBox="0 0 208 117"><g filter="url(#tb)">
  <defs><linearGradient id="sj1" x1="0" x2="1" y1="0" y2="0"><stop offset="0" stop-color="#f4b272"/><stop offset=".28" stop-color="#f1ad70"/><stop offset=".45" stop-color="#e6b48c"/><stop offset=".62" stop-color="#d2b89e"/><stop offset=".85" stop-color="#c2af9a"/><stop offset="1" stop-color="#b3a292"/></linearGradient><radialGradient id="sj2" cx="25" cy="104" r="78" gradientUnits="userSpaceOnUse"><stop offset="0" stop-color="#fff0c0"/><stop offset=".45" stop-color="#fcd9a0" stop-opacity=".85"/><stop offset="1" stop-color="#f6c088" stop-opacity="0"/></radialGradient></defs>
  <rect x="-12" y="-12" width="232" height="141" fill="url(#sj1)"/>
  <rect x="-12" y="-12" width="232" height="141" fill="url(#sj2)"/>
  <polygon points="-12,-12 14,-12 4,70 -12,80" fill="#f5cfa0" opacity="0.7"/>
  <ellipse cx="118" cy="48" rx="29" ry="24" fill="#5b4030"/>
  <polygon points="90,50 94,66 100,64 100,46" fill="#5b4030"/>
  <polygon points="138,44 146,60 142,74 134,70" fill="#553b2c"/>
  <ellipse cx="117" cy="68" rx="22" ry="28" fill="#d9a898"/>
  <ellipse cx="112" cy="66" rx="11" ry="15" fill="#e4b8a8" opacity="0.6"/>
  <polygon points="94,44 118,34 142,46 136,54 116,44 98,56" fill="#5e4232"/>
  <ellipse cx="108" cy="62" rx="4" ry="1.7" fill="#3a2a30" opacity="0.8"/>
  <ellipse cx="125" cy="62" rx="4" ry="1.7" fill="#3a2a30" opacity="0.8"/>
  <ellipse cx="116" cy="71" rx="2.2" ry="4" fill="#c09080" opacity="0.6"/>
  <ellipse cx="116" cy="80" rx="6" ry="1.8" fill="#a8506a"/>
  <polygon points="56,129 74,104 100,92 106,104 128,104 134,92 160,102 186,129" fill="#3a2430"/>
  <polygon points="102,94 132,94 126,110 108,110" fill="#d2a090"/>
  <rect x="88" y="107" width="62" height="22" fill="#e6e2e0"/>
  <rect x="88" y="109" width="62" height="2" fill="#2a2428"/>
  <rect x="88" y="113.5" width="62" height="2" fill="#2a2428"/>
</g>
<rect x=".700" y="97.500" width="70.8" height="19.500" fill="#141414" opacity=".78"/>
<text x="4" y="112" font-size="12.700" fill="#fff" textLength="63" lengthAdjust="spacingAndGlyphs">Sirje Virkus</text>
</svg></div>
<div class="tile" style="left:1412px;top:727px;background:#a6aea6;">
<svg width="208" height="117" viewBox="0 0 208 117"><g filter="url(#tb)">
  <rect x="-12" y="-12" width="24" height="141" fill="#d5d9cf"/>
  <rect x="12" y="-12" width="14" height="141" fill="#b9c0b6"/>
  <rect x="26" y="-12" width="14" height="141" fill="#d6dacc"/>
  <rect x="40" y="-12" width="20" height="141" fill="#8a948e"/>
  <rect x="60" y="-12" width="20" height="141" fill="#c5cac0"/>
  <rect x="80" y="-12" width="22" height="141" fill="#b1b8b0"/>
  <rect x="102" y="-12" width="48" height="141" fill="#939c98"/>
  <rect x="116" y="-12" width="10" height="141" fill="#aab2ac"/>
  <rect x="150" y="-12" width="70" height="141" fill="#dddbd1"/>
  <rect x="170" y="-12" width="50" height="64" fill="#a3aeb6"/>
  <ellipse cx="192" cy="20" rx="12" ry="14" fill="#d4dadd" opacity="0.8"/>
  <rect x="172" y="36" width="48" height="14" fill="#7c8994" opacity="0.7"/>
  <rect x="168" y="-12" width="2" height="66" fill="#eeeeea"/>
  <rect x="168" y="52" width="52" height="2" fill="#eeeeea"/>
  <ellipse cx="96" cy="50" rx="31" ry="30" fill="#c9a080"/>
  <ellipse cx="118" cy="62" rx="8" ry="18" fill="#c09878"/>
  <ellipse cx="92" cy="63" rx="24" ry="30" fill="#d9b0a0"/>
  <ellipse cx="88" cy="60" rx="12" ry="16" fill="#e6c2b2" opacity="0.6"/>
  <polygon points="68,40 94,24 120,38 116,48 92,36 72,52" fill="#cfa684"/>
  <path d="M66 46 h20 v13 h-18 z M92 45 h22 v14 h-20 z M86 48 h6" fill="none" stroke="#2c2a28" stroke-width="1.8" opacity="0.9"/>
  <ellipse cx="86" cy="74" rx="8" ry="2.6" fill="#a04a50"/>
  <polygon points="56,129 62,98 84,88 100,98 124,84 150,92 166,129" fill="#cfc5b8"/>
  <polygon points="124,86 138,88 140,129 122,129" fill="#3a3848"/>
  <polygon points="80,92 96,100 92,129 78,129" fill="#8a7668" opacity="0.7"/>
</g>
<rect x=".700" y="97.500" width="121.3" height="19.500" fill="#141414" opacity=".78"/>
<g transform="translate(0 97.5)"><rect x="7" y="3.500" width="5.600" height="9.300" rx="2.700" fill="#f05a55"/><path d="M9.800 12.500 v2 M7.300 14.700 h5.200" stroke="#f05a55" stroke-width="1.500" fill="none"/><path d="M3.300 16 L17 2.500" stroke="#f05a55" stroke-width="1.500"/></g>
<text x="22" y="112" font-size="12.700" fill="#fff" textLength="96.5" lengthAdjust="spacingAndGlyphs">Nona Popiashvili</text>
</svg></div>
<div class="tile" style="left:1626px;top:727px;background:#d4d6d6;">
<svg width="208" height="117" viewBox="0 0 208 117"><g filter="url(#tb)">
  <ellipse cx="20" cy="10" rx="60" ry="35" fill="#a5a9ad"/>
  <rect x="-12" y="-12" width="232" height="18" fill="#b4b8bb" opacity="0.7"/>
  <ellipse cx="190" cy="60" rx="40" ry="60" fill="#dfe1e1"/>
  <rect x="203" y="-12" width="17" height="42" fill="#8a6a4a"/>
  <rect x="42" y="1" width="49" height="54" fill="#17181a"/>
  <rect x="44.5" y="3" width="44" height="49.5" fill="#c8ccd2"/>
  <rect x="52" y="12" width="30" height="34" fill="#9a9fa8"/>
  <rect x="58" y="16" width="18" height="26" fill="#7f848e"/>
  <rect x="113" y="1" width="48" height="53" fill="#17181a"/>
  <rect x="115.5" y="3" width="43" height="48.5" fill="#ccd0d6"/>
  <rect x="122" y="10" width="30" height="34" fill="#a3a8b0"/>
  <ellipse cx="136" cy="26" rx="5" ry="14" fill="#80858f"/>
  <ellipse cx="117" cy="56" rx="31" ry="24" fill="#4a1c1c"/>
  <ellipse cx="100" cy="64" rx="12" ry="14" fill="#421818"/>
  <ellipse cx="138" cy="62" rx="10" ry="14" fill="#461a1a"/>
  <ellipse cx="122" cy="88" rx="24" ry="28" fill="#d5a898"/>
  <ellipse cx="120" cy="90" rx="12" ry="14" fill="#e0b8a8" opacity="0.6"/>
  <polygon points="94,62 120,48 146,62 140,72 118,64 100,74" fill="#4c1e1e"/>
  <path d="M98 78 a10 8 0 1 0 20 0 a10 8 0 1 0 -20 0 M124 80 a10 8 0 1 0 20 0 a10 8 0 1 0 -20 0 M118 78 h6" fill="none" stroke="#5a3018" stroke-width="2.2"/>
  <ellipse cx="120" cy="97" rx="6" ry="1.8" fill="#a46468"/>
  <polygon points="136,100 160,104 172,129 132,129" fill="#24332e"/>
  <polygon points="84,92 98,98 100,129 80,129" fill="#3a3c3a" opacity="0.6"/>
</g>
<rect x=".700" y="97.500" width="103.3" height="19.500" fill="#141414" opacity=".78"/>
<g transform="translate(0 97.5)"><rect x="7" y="3.500" width="5.600" height="9.300" rx="2.700" fill="#f05a55"/><path d="M9.800 12.500 v2 M7.300 14.700 h5.200" stroke="#f05a55" stroke-width="1.500" fill="none"/><path d="M3.300 16 L17 2.500" stroke="#f05a55" stroke-width="1.500"/></g>
<text x="22" y="112" font-size="12.700" fill="#fff" textLength="77.5" lengthAdjust="spacingAndGlyphs">eka gigashvili</text>
</svg></div>
<div class="tile" style="left:1412px;top:850px;background:#a6b1be;">
<svg width="208" height="117" viewBox="0 0 208 117"><g filter="url(#tb)">
  <rect x="-12" y="-12" width="232" height="56" fill="#a3aebb"/>
  <ellipse cx="40" cy="20" rx="50" ry="14" fill="#c4cad2" opacity="0.7"/>
  <ellipse cx="150" cy="8" rx="50" ry="8" fill="#b9c1cb" opacity="0.7"/>
  <ellipse cx="20" cy="36" rx="30" ry="8" fill="#8d98a6" opacity="0.6"/>
  <polygon points="-12,44 76,35 80,100 -12,100" fill="#dcdad2"/>
  <polygon points="-12,42 76,33 76,37 -12,46" fill="#4a5260"/>
  <rect x="8" y="50" width="2.5" height="8" fill="#6a6e72"/>
  <rect x="16" y="50" width="2.5" height="8" fill="#6a6e72"/>
  <rect x="24" y="50" width="2.5" height="8" fill="#6a6e72"/>
  <rect x="34" y="49" width="2.5" height="8" fill="#6a6e72"/>
  <rect x="43" y="48" width="2.5" height="8" fill="#6a6e72"/>
  <rect x="53" y="48" width="2.5" height="8" fill="#6a6e72"/>
  <rect x="62" y="47" width="2.5" height="8" fill="#6a6e72"/>
  <rect x="8" y="66" width="2.5" height="9" fill="#6a6e72"/>
  <rect x="16" y="66" width="2.5" height="9" fill="#6a6e72"/>
  <rect x="24" y="66" width="2.5" height="9" fill="#6a6e72"/>
  <rect x="34" y="66" width="2.5" height="9" fill="#6a6e72"/>
  <rect x="43" y="65" width="2.5" height="9" fill="#6a6e72"/>
  <rect x="53" y="65" width="2.5" height="9" fill="#6a6e72"/>
  <rect x="62" y="64" width="2.5" height="9" fill="#6a6e72"/>
  <rect x="8" y="83" width="2.5" height="10" fill="#4a4e52"/>
  <rect x="16" y="83" width="2.5" height="10" fill="#4a4e52"/>
  <rect x="34" y="83" width="2.5" height="10" fill="#4a4e52"/>
  <rect x="43" y="83" width="2.5" height="10" fill="#4a4e52"/>
  <rect x="53" y="83" width="2.5" height="10" fill="#4a4e52"/>
  <rect x="62" y="83" width="2.5" height="10" fill="#4a4e52"/>
  <rect x="72" y="83" width="2.5" height="10" fill="#4a4e52"/>
  <rect x="140" y="16" width="80" height="86" fill="#e1ded0"/>
  <polygon points="140,10 165,11 168,18 140,18" fill="#3a4660"/>
  <rect x="168" y="22" width="52" height="4" fill="#7a8494" opacity="0.6"/>
  <rect x="178" y="40" width="4" height="10" fill="#6a6e72"/>
  <rect x="192" y="38" width="4" height="10" fill="#6a6e72"/>
  <rect x="178" y="62" width="4" height="11" fill="#6a6e72"/>
  <rect x="192" y="60" width="4" height="11" fill="#6a6e72"/>
  <rect x="178" y="84" width="4" height="10" fill="#6a6e72"/>
  <rect x="-12" y="96" width="102" height="33" fill="#45463c"/>
  <ellipse cx="18" cy="88" rx="8" ry="8" fill="#3a4034"/>
  <ellipse cx="164" cy="76" rx="14" ry="22" fill="#3c6a34"/>
  <ellipse cx="190" cy="92" rx="10" ry="10" fill="#4a7a3c"/>
  <ellipse cx="190" cy="106" rx="14" ry="9" fill="#a9343c"/>
  <rect x="196" y="108" width="24" height="21" fill="#6a8ab0"/>
  <path d="M186 0 L176 32 M204 2 L188 42" fill="none" stroke="#111114" stroke-width="2.6"/>
  <ellipse cx="118" cy="46" rx="43" ry="42" fill="#2c1c1c"/>
  <ellipse cx="84" cy="70" rx="10" ry="24" fill="#2a1a1a"/>
  <ellipse cx="152" cy="70" rx="10" ry="26" fill="#2a1a1a"/>
  <ellipse cx="118" cy="66" rx="29" ry="37" fill="#c9a7a8"/>
  <ellipse cx="112" cy="64" rx="14" ry="18" fill="#d8b8b8" opacity="0.6"/>
  <polygon points="88,40 120,20 150,40 146,52 118,36 94,52" fill="#2e1e1e"/>
  <ellipse cx="101" cy="54" rx="12" ry="8.5" fill="#a8dcf0"/>
  <ellipse cx="135" cy="59" rx="12" ry="8.5" fill="#9cd4ee"/>
  <ellipse cx="100" cy="52" rx="6" ry="4" fill="#e6f8ff"/>
  <ellipse cx="133" cy="57" rx="6" ry="4" fill="#e0f6ff"/>
  <path d="M88 54 a13 9.500 0 1 0 26 0 a13 9.500 0 1 0 -26 0 M122 59 a13 9.500 0 1 0 26 0 a13 9.500 0 1 0 -26 0 M114 55 l8 2" fill="none" stroke="#3a2430" stroke-width="1.8"/>
  <ellipse cx="118" cy="80" rx="9" ry="3.5" fill="#b8868c"/>
  <polygon points="56,129 62,100 90,92 150,96 178,104 186,129" fill="#1c1a1c"/>
  <polygon points="126,90 134,88 150,112 148,129 134,129" fill="#cfa9a4"/>
</g>
<rect x=".700" y="97.500" width="137.3" height="19.500" fill="#141414" opacity=".78"/>
<g transform="translate(0 97.5)"><rect x="7" y="3.500" width="5.600" height="9.300" rx="2.700" fill="#f05a55"/><path d="M9.800 12.500 v2 M7.300 14.700 h5.200" stroke="#f05a55" stroke-width="1.500" fill="none"/><path d="M3.300 16 L17 2.500" stroke="#f05a55" stroke-width="1.500"/></g>
<text x="22" y="112" font-size="12.700" fill="#fff" textLength="111" lengthAdjust="spacingAndGlyphs">Madona Mikeladze</text>
</svg></div>
<div class="tile" style="left:1626px;top:850px;background:#d8d3b8;">
<svg width="208" height="117" viewBox="0 0 208 117"><g filter="url(#tb)">
  <rect x="128" y="-12" width="92" height="141" fill="#dad5ba"/>
  <ellipse cx="180" cy="90" rx="40" ry="50" fill="#cfc9ae" opacity="0.6"/>
  <rect x="190" y="-12" width="30" height="141" fill="#d2cdb2"/>
  <polygon points="-12,-12 72,-12 62,24 -12,6" fill="#b5ad88"/>
  <polygon points="-12,6 62,24 60,129 -12,129" fill="#3a1a10"/>
  <polygon points="-12,50 16,52 14,96 -12,96" fill="#a08450"/>
  <polygon points="34,60 48,62 46,92 34,90" fill="#947a48"/>
  <polygon points="4,24 22,30 16,40 2,36" fill="#8a7448" opacity="0.8"/>
  <polygon points="36,30 50,34 46,46 34,42" fill="#7a6840" opacity="0.8"/>
  <path d="M0 20 L58 38 M24 10 L22 110 M0 46 L50 54" fill="none" stroke="#4a2416" stroke-width="3"/>
  <ellipse cx="100" cy="34" rx="39" ry="44" fill="#6b3420"/>
  <ellipse cx="70" cy="60" rx="14" ry="26" fill="#5f2e1c"/>
  <ellipse cx="132" cy="56" rx="10" ry="24" fill="#663220"/>
  <ellipse cx="104" cy="38" rx="25" ry="36" fill="#d9a890"/>
  <ellipse cx="100" cy="34" rx="13" ry="18" fill="#e6baa4" opacity="0.6"/>
  <polygon points="70,20 100,-12 132,4 136,30 118,14 86,18 76,40" fill="#6e3622"/>
  <ellipse cx="92" cy="28" rx="6" ry="2" fill="#3a2220" opacity="0.8"/>
  <ellipse cx="114" cy="30" rx="6" ry="2" fill="#3a2220" opacity="0.8"/>
  <ellipse cx="102" cy="40" rx="3" ry="6" fill="#c08c74" opacity="0.6"/>
  <ellipse cx="98" cy="52" rx="7" ry="2" fill="#a8606a"/>
  <ellipse cx="84" cy="80" rx="17" ry="19" fill="#dcae98"/>
  <ellipse cx="80" cy="74" rx="9" ry="9" fill="#e8c0ac" opacity="0.6"/>
  <polygon points="34,129 40,96 66,82 100,104 150,68 166,90 176,129" fill="#8b8789"/>
  <polygon points="52,96 66,84 72,98 60,106" fill="#bcc7e2"/>
  <polygon points="104,104 118,78 140,74 136,96 116,129 100,129" fill="#b8c3e0"/>
  <polygon points="136,70 152,68 168,96 172,129 140,129 138,96" fill="#8f8b8d"/>
</g>
<rect x=".700" y="97.500" width="113.3" height="19.500" fill="#141414" opacity=".78"/>
<g transform="translate(0 97.5)"><rect x="7" y="3.500" width="5.600" height="9.300" rx="2.700" fill="#f05a55"/><path d="M9.800 12.500 v2 M7.300 14.700 h5.200" stroke="#f05a55" stroke-width="1.500" fill="none"/><path d="M3.300 16 L17 2.500" stroke="#f05a55" stroke-width="1.500"/></g>
<text x="22" y="112" font-size="12.700" fill="#fff" textLength="88" lengthAdjust="spacingAndGlyphs">Nino Samnidze</text>
</svg></div>
<!--TILES-END-->

<!-- ================= ZOOM BOTTOM BAR ================= -->
<div class="a" style="left:1847px;top:1040px;width:61px;height:27px;border-radius:7px;background:#b92525;"></div>

<!-- ================= OVERLAY: ZOOM TEXT + ICONS ================= -->
<svg id="zoomui" width="1920" height="1080" viewBox="0 0 1920 1080">
  <defs>
    <radialGradient id="recg" cx="50%" cy="75%" r="60%">
      <stop offset="0" stop-color="#ffe9e4"/><stop offset=".35" stop-color="#ef7b6c"/><stop offset="1" stop-color="#c62f23"/>
    </radialGradient>
  </defs>
  <!-- shield -->
  <path d="M20 13 L26.5 15.6 V20 C26.5 23.6 23.8 26 20 27.3 C16.2 26 13.5 23.6 13.5 20 V15.6 Z" fill="#23d15a"/>
  <path d="M16.8 20.2 L19.2 22.6 L23.4 18" fill="none" stroke="#1e2b22" stroke-width="1.7"/>
  <!-- recording -->
  <circle cx="52" cy="20" r="6" fill="url(#recg)"/>
  <text x="64" y="24.5" font-size="12.6" fill="#fff" textLength="52" lengthAdjust="spacingAndGlyphs">Recording</text>
  <!-- banner -->
  <text x="775" y="15" font-size="12.8" font-weight="bold" fill="#2a4a18" textLength="244" lengthAdjust="spacingAndGlyphs">You are viewing Izabela Petriashvili's screen</text>
  <text x="1064" y="15" font-size="12.6" font-weight="bold" fill="#fff" textLength="69" lengthAdjust="spacingAndGlyphs">View Options</text>
  <path d="M1139.5 9.5 L1142.5 12.5 L1145.5 9.5" fill="none" stroke="#fff" stroke-width="1.4"/>
  <!-- view btn -->
  <g fill="#e8e8e8">
    <rect x="1864" y="15" width="2.8" height="2.8"/><rect x="1867.6" y="15" width="2.8" height="2.8"/><rect x="1871.2" y="15" width="2.8" height="2.8"/>
    <rect x="1864" y="18.6" width="2.8" height="2.8"/><rect x="1867.6" y="18.6" width="2.8" height="2.8"/><rect x="1871.2" y="18.6" width="2.8" height="2.8"/>
    <rect x="1864" y="22.2" width="2.8" height="2.8"/><rect x="1867.6" y="22.2" width="2.8" height="2.8"/><rect x="1871.2" y="22.2" width="2.8" height="2.8"/>
  </g>
  <text x="1880" y="24.5" font-size="12.6" fill="#fff" textLength="25" lengthAdjust="spacingAndGlyphs">View</text>

  <!-- splitter handle -->
  <path d="M1318.500 527 V553 M1321.500 527 V553" stroke="#a9a9a9" stroke-width="1.200"/>
  <!-- bottom toolbar -->
  <g fill="#a8a8a8" stroke="none">
    <!-- mic -->
    <rect x="42" y="1032.5" width="8" height="15" rx="4"/>
    <path d="M39.7 1044 v1.2 a6.3 6.3 0 0 0 12.6 0 v-1.2" fill="none" stroke="#a8a8a8" stroke-width="1.4"/>
    <rect x="45.3" y="1051" width="1.4" height="3"/><rect x="42.5" y="1053.6" width="7" height="1.4"/>
    <!-- camera -->
    <rect x="127" y="1037" width="18" height="14" rx="2.5"/>
    <path d="M146 1042.5 L151 1038.5 V1049.5 L146 1045.5 Z"/>
    <!-- participants -->
    <circle cx="831" cy="1039.6" r="4.4"/>
    <path d="M822.8 1053 v-2.5 c0 -3 3.5 -4.8 8.2 -4.8 s8.2 1.8 8.2 4.8 v2.500 z"/>
    <circle cx="840.6" cy="1041.4" r="3.6"/>
    <path d="M838.6 1053 v-3 c0 -1.500 -.5 -2.600 -1.400 -3.600 c1 -.300 2.200 -.5 3.400 -.5 c3.700 0 6.700 1.700 6.700 4.300 v2.800 z"/>
    <!-- chat -->
    <path d="M933 1037 h14 a3 3 0 0 1 3 3 v8 a3 3 0 0 1 -3 3 h-8.500 l-4.300 4 v-4 h-1.200 a3 3 0 0 1 -3 -3 v-8 a3 3 0 0 1 3 -3 z"/>
    <!-- record -->
    <circle cx="1117.800" cy="1044" r="9.200" fill="none" stroke="#a8a8a8" stroke-width="1.4"/>
    <circle cx="1117.800" cy="1044" r="7"/>
    <!-- reactions -->
    <circle cx="1197.700" cy="1044.400" r="8.800"/>
  </g>
  <circle cx="1206" cy="1036" r="4.600" fill="#1a1a1a"/>
  <path d="M1206 1033 v6 M1203 1036 h6" stroke="#d0d0d0" stroke-width="1.200"/>
  <circle cx="1194.600" cy="1042.300" r="1.200" fill="#1a1a1a"/><circle cx="1200.800" cy="1042.300" r="1.200" fill="#1a1a1a"/>
  <path d="M1193.500 1046 a4.300 4.300 0 0 0 8.400 0" fill="none" stroke="#1a1a1a" stroke-width="1.300"/>
  <!-- share -->
  <rect x="1016.800" y="1035" width="24.200" height="18" rx="3" fill="#23d959"/>
  <path d="M1029 1049 v-9 M1025.300 1043.500 L1029 1039.800 L1032.700 1043.500" fill="none" stroke="#1a1a1a" stroke-width="1.700"/>
  <!-- slashes -->
  <path d="M36.500 1056.500 L59 1034 M129 1056.500 L152 1034" stroke="#1a1a1a" stroke-width="1.800"/>
  <path d="M35 1055 L57.500 1032.500" stroke="#f0484a" stroke-width="1.600"/>
  <path d="M127.500 1055 L150.500 1032.500" stroke="#f0484a" stroke-width="1.600"/>
  <!-- carets -->
  <g fill="none" stroke="#d6d6d6" stroke-width="1.300">
    <path d="M74.500 1046 L78 1042.500 L81.500 1046"/><path d="M172.500 1046 L176 1042.500 L179.500 1046"/><path d="M884.500 1046 L888 1042.500 L891.500 1046"/>
  </g>
  <g font-size="12.300" fill="#d9d9d9">
    <text x="24" y="1070.800" textLength="43" lengthAdjust="spacingAndGlyphs">Unmute</text>
    <text x="109" y="1070.800" textLength="59" lengthAdjust="spacingAndGlyphs">Start Video</text>
    <text x="804.500" y="1070.800" textLength="61.500" lengthAdjust="spacingAndGlyphs">Participants</text>
    <text x="851" y="1046" textLength="14" lengthAdjust="spacingAndGlyphs">34</text>
    <text x="928" y="1070.800" textLength="24" lengthAdjust="spacingAndGlyphs">Chat</text>
    <text x="994.200" y="1070.800" fill="#23d959" stroke="#23d959" stroke-width=".350" textLength="68.400" lengthAdjust="spacingAndGlyphs">Share Screen</text>
    <text x="1099" y="1070.800" textLength="36.700" lengthAdjust="spacingAndGlyphs">Record</text>
    <text x="1172.500" y="1070.800" textLength="50.500" lengthAdjust="spacingAndGlyphs">Reactions</text>
  </g>
  <text x="1860.500" y="1057" font-size="12.800" font-weight="bold" fill="#fff" textLength="32.300" lengthAdjust="spacingAndGlyphs">Leave</text>
</svg>

</body>
</html>
